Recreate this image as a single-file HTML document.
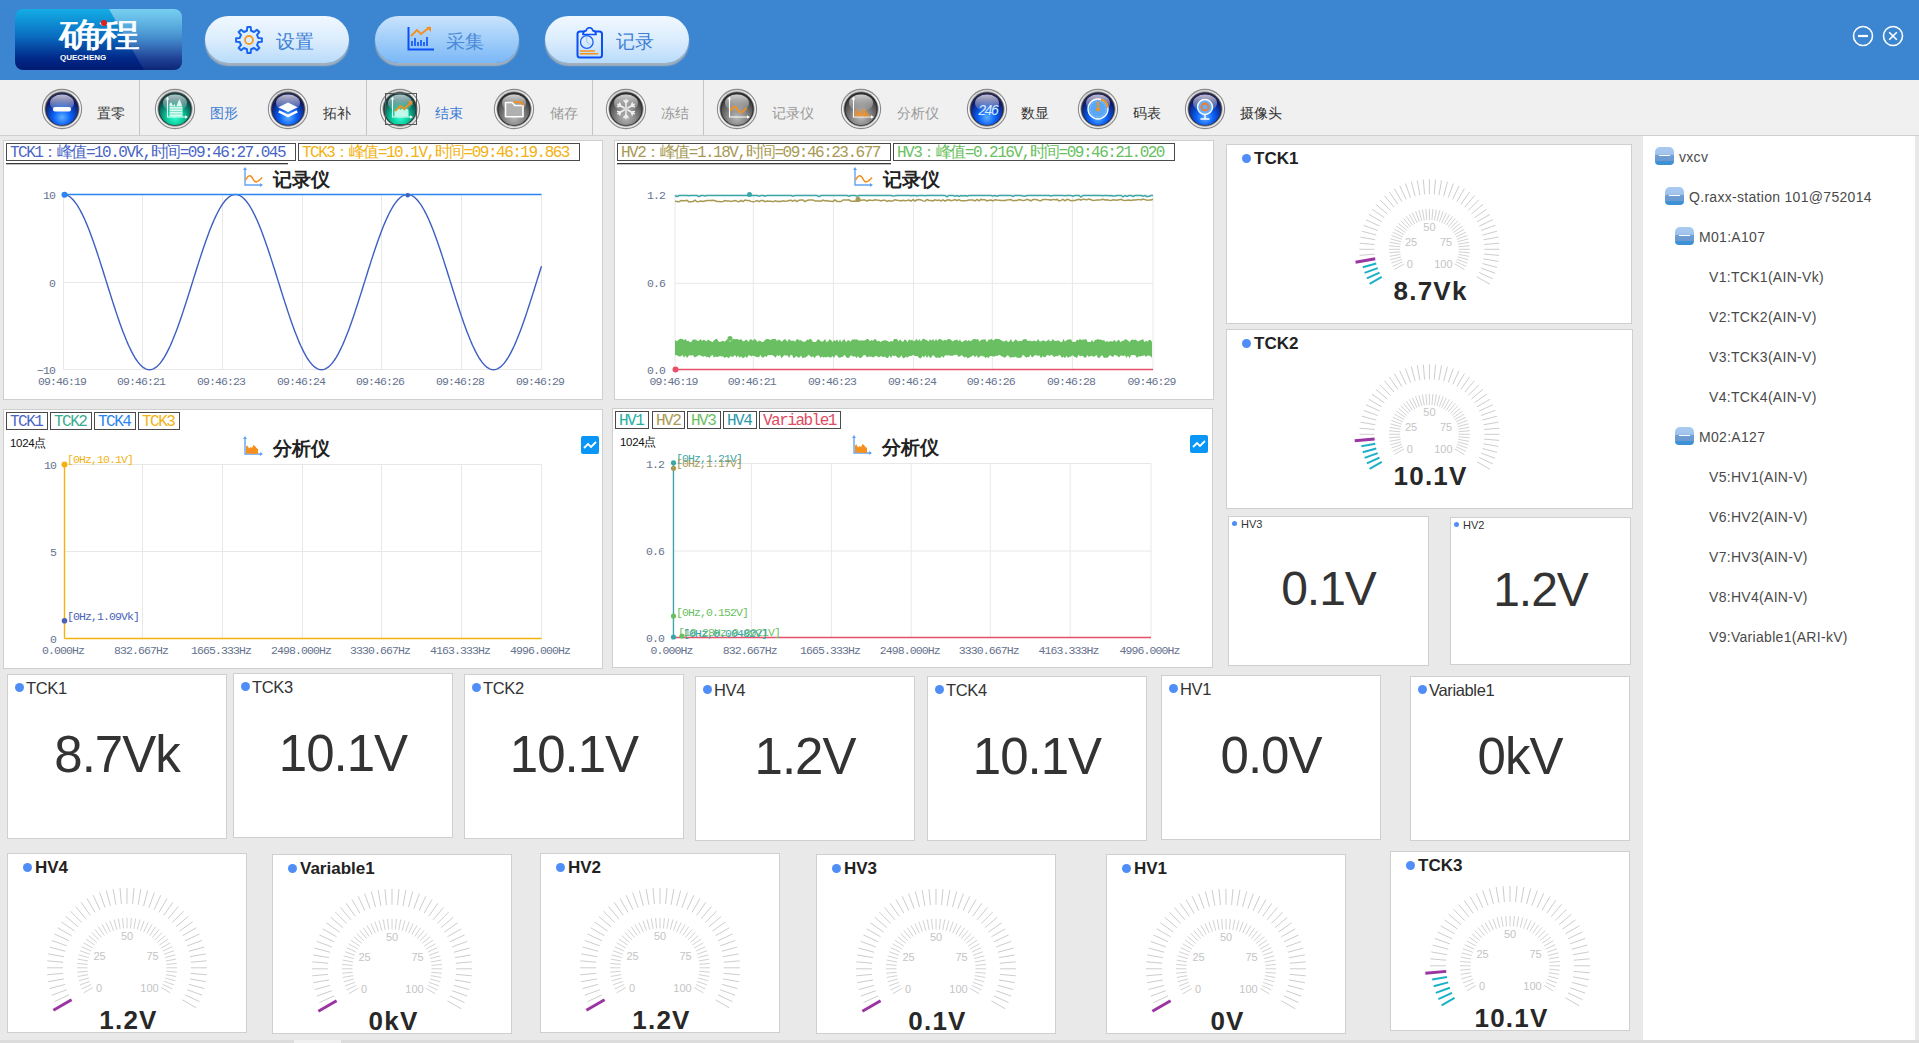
<!DOCTYPE html><html><head><meta charset="utf-8"><style>
*{box-sizing:border-box;margin:0;padding:0}
html,body{width:1919px;height:1043px;overflow:hidden;background:#e9e9e9;font-family:"Liberation Sans",sans-serif;position:relative}
.a{position:absolute}
.panel{position:absolute;background:#fff;border:1px solid #cfcfcf}
.lg{position:absolute;border:1px solid #4a4a4a;font-family:"Liberation Mono",monospace;font-size:16px;letter-spacing:-1.5px;line-height:18px;white-space:nowrap;padding-left:3px}
.ttl{position:absolute;font-size:19px;font-weight:bold;color:#222;line-height:20px;white-space:nowrap}
.dot{position:absolute;width:9px;height:9px;border-radius:50%;background:#4f8ef7}
.nc .lab{position:absolute;font-size:16px;color:#333;line-height:16px;white-space:nowrap}
.val{position:absolute;left:0;right:0;text-align:center;color:#333;white-space:nowrap}
.tb{position:absolute;font-size:14px;line-height:14px;white-space:nowrap}
.tree{position:absolute;font-size:14px;color:#4a4a4a;line-height:16px;white-space:nowrap;letter-spacing:0.3px}
</style></head><body>
<div class="a" style="left:0;top:0;width:1919px;height:80px;background:#3c85d0"></div>
<div class="a" style="left:15px;top:9px;width:167px;height:61px;border-radius:8px;overflow:hidden;background:linear-gradient(180deg,#14aee6 0%,#0a6cc0 45%,#022a8a 80%,#001a70 100%)">
<div class="a" style="left:0;top:0;width:300px;height:100%;background:linear-gradient(180deg,rgba(255,255,255,0.42),rgba(255,255,255,0.05));clip-path:polygon(94px 0,167px 0,167px 61px,129px 61px)"></div>
<div class="a" style="left:44px;top:9px;font-size:33px;line-height:34px;font-weight:normal;color:#fff;letter-spacing:-2px;transform:scaleX(1.27);transform-origin:0 0;-webkit-text-stroke:0.6px #fff">确程</div>
<div class="a" style="left:45px;top:44px;font-size:8px;line-height:9px;font-weight:bold;color:#fff">QUECHENG</div>
<div class="a" style="left:86px;top:11px;width:6px;height:6px;border-radius:50%;background:#e02020"></div>
</div>
<div class="a" style="left:205px;top:16px;width:144px;height:47px;border-radius:24px;background:linear-gradient(180deg,#f0f8ff 0%,#dcedfd 50%,#b8dbfa 100%);box-shadow:0 3px 1.5px rgba(170,178,186,0.95)">
<div class="a" style="left:29px;top:9px;width:30px;height:30px"><svg width="30" height="30" viewBox="0 0 30 30"><polygon points="24.27,12.93 27.89,13.31 27.89,16.69 24.27,17.07 23.02,20.09 25.31,22.92 22.92,25.31 20.09,23.02 17.07,24.27 16.69,27.89 13.31,27.89 12.93,24.27 9.91,23.02 7.08,25.31 4.69,22.92 6.98,20.09 5.73,17.07 2.11,16.69 2.11,13.31 5.73,12.93 6.98,9.91 4.69,7.08 7.08,4.69 9.91,6.98 12.93,5.73 13.31,2.11 16.69,2.11 17.07,5.73 20.09,6.98 22.92,4.69 25.31,7.08 23.02,9.91" fill="none" stroke="#1a66f0" stroke-width="2" stroke-linejoin="round"/><circle cx="15" cy="15" r="4" fill="none" stroke="#f59a23" stroke-width="1.8"/></svg></div>
<div class="a" style="left:71px;top:16px;font-size:19px;line-height:20px;color:#3c7fd4;letter-spacing:0px">设置</div>
</div>
<div class="a" style="left:375px;top:16px;width:144px;height:47px;border-radius:24px;background:linear-gradient(180deg,#c9e3fd 0%,#a5d0fa 45%,#7ab8f6 100%);box-shadow:0 3px 1.5px rgba(170,178,186,0.95)">
<div class="a" style="left:29px;top:9px;width:30px;height:30px"><svg width="30" height="30" viewBox="0 0 30 30"><path d="M4.5 2v22.5h27" fill="none" stroke="#0a50f5" stroke-width="2"/><path d="M8 21v-5M11 21v-8M14 21v-4M17 21v-6M20 21v-4M23 21v-9" stroke="#0a50f5" stroke-width="1.6"/><path d="M7 11l6-6 4 4 9-7" fill="none" stroke="#f5901e" stroke-width="1.8"/><path d="M22 2h5v5z" fill="#f5901e"/></svg></div>
<div class="a" style="left:71px;top:16px;font-size:19px;line-height:20px;color:#4a8ad8;letter-spacing:0px">采集</div>
</div>
<div class="a" style="left:545px;top:16px;width:144px;height:47px;border-radius:24px;background:linear-gradient(180deg,#f0f8ff 0%,#dcedfd 50%,#b8dbfa 100%);box-shadow:0 3px 1.5px rgba(170,178,186,0.95)">
<div class="a" style="left:29px;top:9px;width:30px;height:30px"><svg width="30" height="34" viewBox="0 0 30 34" style="position:absolute;left:2px;top:2px"><rect x="1.5" y="4.5" width="24.5" height="26" rx="2.5" fill="none" stroke="#0a50f5" stroke-width="2"/><path d="M7 7.5c0-2 1-3.5 3-3.8 0.6-2 2-3 3.5-3s2.9 1 3.5 3c2 0.3 3 1.8 3 3.8z" fill="#e6f3ff" stroke="#0a50f5" stroke-width="1.7"/><circle cx="10.8" cy="15" r="6.3" fill="none" stroke="#1a5ef5" stroke-width="1.3"/><path d="M10.8 9v6l4 3" fill="none" stroke="#8ab8f8" stroke-width="0.8"/><path d="M3.8 24h15.2M3.8 26.8h18.4" stroke="#f5901e" stroke-width="1.5"/></svg></div>
<div class="a" style="left:71px;top:16px;font-size:19px;line-height:20px;color:#3c7fd4;letter-spacing:0px">记录</div>
</div>
<svg class="a" style="left:1850px;top:23px" width="58" height="26" viewBox="0 0 58 26">
<circle cx="13" cy="13" r="9.5" fill="none" stroke="#fff" stroke-width="1.6"/><path d="M8 13h10" stroke="#fff" stroke-width="2.2"/>
<circle cx="43" cy="13" r="9.5" fill="none" stroke="#fff" stroke-width="1.6"/><path d="M39.2 9.2l7.6 7.6M46.8 9.2l-7.6 7.6" stroke="#fff" stroke-width="1.6"/>
</svg>
<div class="a" style="left:0;top:80px;width:1919px;height:56px;background:#f0f0f0;border-bottom:1px solid #cfcfcf"></div>
<div class="a" style="left:139px;top:80px;width:1px;height:55px;background:#c4c4c4"></div>
<div class="a" style="left:366px;top:80px;width:1px;height:55px;background:#c4c4c4"></div>
<div class="a" style="left:592px;top:80px;width:1px;height:55px;background:#c4c4c4"></div>
<div class="a" style="left:703px;top:80px;width:1px;height:55px;background:#c4c4c4"></div>
<svg class="a" style="left:40px;top:86.7px" width="44" height="44" viewBox="0 0 44 44"><defs><radialGradient id="d62" cx="50%" cy="75%" r="62%"><stop offset="0" stop-color="#5fb0ff"/><stop offset="0.45" stop-color="#0a60f6"/><stop offset="1" stop-color="#0a1a70"/></radialGradient><linearGradient id="h62" x1="0" y1="0" x2="0" y2="1"><stop offset="0" stop-color="#c9c6d6" stop-opacity="0.95"/><stop offset="1" stop-color="#c9c6d6" stop-opacity="0.1"/></linearGradient></defs><linearGradient id="s62" x1="0" y1="0" x2="0.3" y2="1"><stop offset="0" stop-color="#c8c8c8"/><stop offset="0.5" stop-color="#ffffff"/><stop offset="1" stop-color="#e6e6e6"/></linearGradient><circle cx="22" cy="22" r="19.6" fill="url(#s62)" stroke="#8a8a8a" stroke-width="1.1"/><circle cx="22" cy="22" r="17.2" fill="#2a2a44" stroke="#a0a0a0" stroke-width="0.8"/><circle cx="22" cy="22.5" r="15.6" fill="url(#d62)"/><ellipse cx="22" cy="16" rx="12" ry="8.5" fill="url(#h62)"/><g transform="translate(2,2)"><rect x="11" y="18" width="18" height="4.5" rx="2" fill="#fff"/></g></svg>
<div class="tb" style="left:97px;top:106px;color:#333">置零</div>
<svg class="a" style="left:153px;top:86.7px" width="44" height="44" viewBox="0 0 44 44"><defs><radialGradient id="d175" cx="50%" cy="75%" r="62%"><stop offset="0" stop-color="#30ffd0"/><stop offset="0.45" stop-color="#08c89a"/><stop offset="1" stop-color="#0a4a48"/></radialGradient><linearGradient id="h175" x1="0" y1="0" x2="0" y2="1"><stop offset="0" stop-color="#b8ccd0" stop-opacity="0.95"/><stop offset="1" stop-color="#b8ccd0" stop-opacity="0.1"/></linearGradient></defs><linearGradient id="s175" x1="0" y1="0" x2="0.3" y2="1"><stop offset="0" stop-color="#c8c8c8"/><stop offset="0.5" stop-color="#ffffff"/><stop offset="1" stop-color="#e6e6e6"/></linearGradient><circle cx="22" cy="22" r="19.6" fill="url(#s175)" stroke="#8a8a8a" stroke-width="1.1"/><circle cx="22" cy="22" r="17.2" fill="#243c3a" stroke="#a0a0a0" stroke-width="0.8"/><circle cx="22" cy="22.5" r="15.6" fill="url(#d175)"/><ellipse cx="22" cy="16" rx="12" ry="8.5" fill="url(#h175)"/><g transform="translate(2,2)"><path d="M12.5 9.5v18.5h18" fill="none" stroke="#e8fff8" stroke-width="1.1"/><path d="M10.8 10.5l1.7-3 1.7 3z M30 26.3l3 1.7-3 1.7z" fill="#e8fff8"/><path d="M14.5 27.5V15l1.5-2 2 4 1.5-2 1.5 3 2-5 1.5-3 2 5 1 4v8.5z" fill="#e6fff6" opacity="0.92"/><g stroke="#3ac8a8" stroke-width="0.7" opacity="0.8"><path d="M14 17.5h13M14 20h13M14 22.5h13M14 25h13"/></g></g></svg>
<div class="tb" style="left:210px;top:106px;color:#3a7bd5">图形</div>
<svg class="a" style="left:266px;top:86.7px" width="44" height="44" viewBox="0 0 44 44"><defs><radialGradient id="d288" cx="50%" cy="75%" r="62%"><stop offset="0" stop-color="#5fb0ff"/><stop offset="0.45" stop-color="#0a60f6"/><stop offset="1" stop-color="#0a1a70"/></radialGradient><linearGradient id="h288" x1="0" y1="0" x2="0" y2="1"><stop offset="0" stop-color="#c9c6d6" stop-opacity="0.95"/><stop offset="1" stop-color="#c9c6d6" stop-opacity="0.1"/></linearGradient></defs><linearGradient id="s288" x1="0" y1="0" x2="0.3" y2="1"><stop offset="0" stop-color="#c8c8c8"/><stop offset="0.5" stop-color="#ffffff"/><stop offset="1" stop-color="#e6e6e6"/></linearGradient><circle cx="22" cy="22" r="19.6" fill="url(#s288)" stroke="#8a8a8a" stroke-width="1.1"/><circle cx="22" cy="22" r="17.2" fill="#2a2a44" stroke="#a0a0a0" stroke-width="0.8"/><circle cx="22" cy="22.5" r="15.6" fill="url(#d288)"/><ellipse cx="22" cy="16" rx="12" ry="8.5" fill="url(#h288)"/><g transform="translate(2,2)"><path d="M20 13.5l9.5 4.8-9.5 4.8-9.5-4.8z" fill="#fff"/><path d="M10.8 22.3l9.2 4.6 9.2-4.6" fill="none" stroke="#fff" stroke-width="2.6"/></g></svg>
<div class="tb" style="left:323px;top:106px;color:#333">拓补</div>
<svg class="a" style="left:378px;top:86.7px" width="44" height="44" viewBox="0 0 44 44"><defs><radialGradient id="d400" cx="50%" cy="75%" r="62%"><stop offset="0" stop-color="#30ffd0"/><stop offset="0.45" stop-color="#08c89a"/><stop offset="1" stop-color="#0a4a48"/></radialGradient><linearGradient id="h400" x1="0" y1="0" x2="0" y2="1"><stop offset="0" stop-color="#b8ccd0" stop-opacity="0.95"/><stop offset="1" stop-color="#b8ccd0" stop-opacity="0.1"/></linearGradient></defs><linearGradient id="s400" x1="0" y1="0" x2="0.3" y2="1"><stop offset="0" stop-color="#c8c8c8"/><stop offset="0.5" stop-color="#ffffff"/><stop offset="1" stop-color="#e6e6e6"/></linearGradient><circle cx="22" cy="22" r="19.6" fill="url(#s400)" stroke="#8a8a8a" stroke-width="1.1"/><circle cx="22" cy="22" r="17.2" fill="#243c3a" stroke="#a0a0a0" stroke-width="0.8"/><circle cx="22" cy="22.5" r="15.6" fill="url(#d400)"/><ellipse cx="22" cy="16" rx="12" ry="8.5" fill="url(#h400)"/><g transform="translate(2,2)"><path d="M12.5 9.5v18.5h18" fill="none" stroke="#e8fff8" stroke-width="1.1"/><path d="M10.8 10.5l1.7-3 1.7 3z M30 26.3l3 1.7-3 1.7z" fill="#e8fff8"/><path d="M14.5 27.5V21l2 1 2-3 2 2 2-1.5 2 2 2-2 2 1.5v6.5z" fill="#dffff4" opacity="0.85"/><path d="M15 22l5.5-5 3.5 3 6-5.5" fill="none" stroke="#f5901e" stroke-width="1.8"/><path d="M28 12h4.5v4.5z" fill="#f5901e"/></g></svg>
<div class="tb" style="left:435px;top:106px;color:#3a7bd5">结束</div>
<svg class="a" style="left:492px;top:86.7px" width="44" height="44" viewBox="0 0 44 44"><defs><radialGradient id="d514" cx="50%" cy="75%" r="62%"><stop offset="0" stop-color="#b8b8b8"/><stop offset="0.45" stop-color="#8c8c8c"/><stop offset="1" stop-color="#454545"/></radialGradient><linearGradient id="h514" x1="0" y1="0" x2="0" y2="1"><stop offset="0" stop-color="#d8d8d8" stop-opacity="0.95"/><stop offset="1" stop-color="#d8d8d8" stop-opacity="0.1"/></linearGradient></defs><linearGradient id="s514" x1="0" y1="0" x2="0.3" y2="1"><stop offset="0" stop-color="#c8c8c8"/><stop offset="0.5" stop-color="#ffffff"/><stop offset="1" stop-color="#e6e6e6"/></linearGradient><circle cx="22" cy="22" r="19.6" fill="url(#s514)" stroke="#8a8a8a" stroke-width="1.1"/><circle cx="22" cy="22" r="17.2" fill="#2c2c2c" stroke="#a0a0a0" stroke-width="0.8"/><circle cx="22" cy="22.5" r="15.6" fill="url(#d514)"/><ellipse cx="22" cy="16" rx="12" ry="8.5" fill="url(#h514)"/><g transform="translate(2,2)"><path d="M11.5 13.5h6.8l2.4 3h8.3v11.2h-17.5z" fill="#b0b0b0" stroke="#fff" stroke-width="1.6" stroke-linejoin="round"/><path d="M19.5 13.2h7.8l1.8 3" fill="none" stroke="#f5901e" stroke-width="1.8"/></g></svg>
<div class="tb" style="left:550px;top:106px;color:#999">储存</div>
<svg class="a" style="left:604px;top:86.7px" width="44" height="44" viewBox="0 0 44 44"><defs><radialGradient id="d626" cx="50%" cy="75%" r="62%"><stop offset="0" stop-color="#b8b8b8"/><stop offset="0.45" stop-color="#8c8c8c"/><stop offset="1" stop-color="#454545"/></radialGradient><linearGradient id="h626" x1="0" y1="0" x2="0" y2="1"><stop offset="0" stop-color="#d8d8d8" stop-opacity="0.95"/><stop offset="1" stop-color="#d8d8d8" stop-opacity="0.1"/></linearGradient></defs><linearGradient id="s626" x1="0" y1="0" x2="0.3" y2="1"><stop offset="0" stop-color="#c8c8c8"/><stop offset="0.5" stop-color="#ffffff"/><stop offset="1" stop-color="#e6e6e6"/></linearGradient><circle cx="22" cy="22" r="19.6" fill="url(#s626)" stroke="#8a8a8a" stroke-width="1.1"/><circle cx="22" cy="22" r="17.2" fill="#2c2c2c" stroke="#a0a0a0" stroke-width="0.8"/><circle cx="22" cy="22.5" r="15.6" fill="url(#d626)"/><ellipse cx="22" cy="16" rx="12" ry="8.5" fill="url(#h626)"/><g transform="translate(2,2)"><path d="M20 20L20.00 10.50 M20.00 14.00L17.94 11.55 M20.00 14.00L22.06 11.55 M20 20L11.77 15.25 M14.80 17.00L11.65 17.56 M14.80 17.00L13.71 13.99 M20 20L11.77 24.75 M14.80 23.00L13.71 26.01 M14.80 23.00L11.65 22.44 M20 20L20.00 29.50 M20.00 26.00L22.06 28.45 M20.00 26.00L17.94 28.45 M20 20L28.23 24.75 M25.20 23.00L28.35 22.44 M25.20 23.00L26.29 26.01 M20 20L28.23 15.25 M25.20 17.00L26.29 13.99 M25.20 17.00L28.35 17.56" stroke="#f0f0f0" stroke-width="1.5" fill="none" stroke-linecap="round"/><circle cx="20" cy="20" r="2.2" fill="#d8d8d8"/></g></svg>
<div class="tb" style="left:661px;top:106px;color:#999">冻结</div>
<svg class="a" style="left:715px;top:86.7px" width="44" height="44" viewBox="0 0 44 44"><defs><radialGradient id="d737" cx="50%" cy="75%" r="62%"><stop offset="0" stop-color="#b8b8b8"/><stop offset="0.45" stop-color="#8c8c8c"/><stop offset="1" stop-color="#454545"/></radialGradient><linearGradient id="h737" x1="0" y1="0" x2="0" y2="1"><stop offset="0" stop-color="#d8d8d8" stop-opacity="0.95"/><stop offset="1" stop-color="#d8d8d8" stop-opacity="0.1"/></linearGradient></defs><linearGradient id="s737" x1="0" y1="0" x2="0.3" y2="1"><stop offset="0" stop-color="#c8c8c8"/><stop offset="0.5" stop-color="#ffffff"/><stop offset="1" stop-color="#e6e6e6"/></linearGradient><circle cx="22" cy="22" r="19.6" fill="url(#s737)" stroke="#8a8a8a" stroke-width="1.1"/><circle cx="22" cy="22" r="17.2" fill="#2c2c2c" stroke="#a0a0a0" stroke-width="0.8"/><circle cx="22" cy="22.5" r="15.6" fill="url(#d737)"/><ellipse cx="22" cy="16" rx="12" ry="8.5" fill="url(#h737)"/><g transform="translate(2,2)"><path d="M12.5 9.5v18.5h18" fill="none" stroke="#fff" stroke-width="1.1"/><path d="M10.8 10.5l1.7-3 1.7 3z M30 26.3l3 1.7-3 1.7z" fill="#fff"/><path d="M13.5 22c2.5-5 5-5.5 7-1.5s4.5 4 9-1.5" fill="none" stroke="#f5901e" stroke-width="1.8"/></g></svg>
<div class="tb" style="left:772px;top:106px;color:#999">记录仪</div>
<svg class="a" style="left:839px;top:86.7px" width="44" height="44" viewBox="0 0 44 44"><defs><radialGradient id="d861" cx="50%" cy="75%" r="62%"><stop offset="0" stop-color="#b8b8b8"/><stop offset="0.45" stop-color="#8c8c8c"/><stop offset="1" stop-color="#454545"/></radialGradient><linearGradient id="h861" x1="0" y1="0" x2="0" y2="1"><stop offset="0" stop-color="#d8d8d8" stop-opacity="0.95"/><stop offset="1" stop-color="#d8d8d8" stop-opacity="0.1"/></linearGradient></defs><linearGradient id="s861" x1="0" y1="0" x2="0.3" y2="1"><stop offset="0" stop-color="#c8c8c8"/><stop offset="0.5" stop-color="#ffffff"/><stop offset="1" stop-color="#e6e6e6"/></linearGradient><circle cx="22" cy="22" r="19.6" fill="url(#s861)" stroke="#8a8a8a" stroke-width="1.1"/><circle cx="22" cy="22" r="17.2" fill="#2c2c2c" stroke="#a0a0a0" stroke-width="0.8"/><circle cx="22" cy="22.5" r="15.6" fill="url(#d861)"/><ellipse cx="22" cy="16" rx="12" ry="8.5" fill="url(#h861)"/><g transform="translate(2,2)"><path d="M12.5 9.5v18.5h18" fill="none" stroke="#fff" stroke-width="1.1"/><path d="M10.8 10.5l1.7-3 1.7 3z M30 26.3l3 1.7-3 1.7z" fill="#fff"/><g stroke="#f5901e" stroke-width="1.1"><path d="M14.5 27.5v-6M16 27.5v-7.5M17.5 27.5v-5M19 27.5v-4M20.5 27.5v-6M22 27.5v-8M23.5 27.5v-7M25 27.5v-5M26.5 27.5v-3.5M28 27.5v-2"/></g></g></svg>
<div class="tb" style="left:897px;top:106px;color:#999">分析仪</div>
<svg class="a" style="left:965px;top:86.7px" width="44" height="44" viewBox="0 0 44 44"><defs><radialGradient id="d987" cx="50%" cy="75%" r="62%"><stop offset="0" stop-color="#5fb0ff"/><stop offset="0.45" stop-color="#0a60f6"/><stop offset="1" stop-color="#0a1a70"/></radialGradient><linearGradient id="h987" x1="0" y1="0" x2="0" y2="1"><stop offset="0" stop-color="#c9c6d6" stop-opacity="0.95"/><stop offset="1" stop-color="#c9c6d6" stop-opacity="0.1"/></linearGradient></defs><linearGradient id="s987" x1="0" y1="0" x2="0.3" y2="1"><stop offset="0" stop-color="#c8c8c8"/><stop offset="0.5" stop-color="#ffffff"/><stop offset="1" stop-color="#e6e6e6"/></linearGradient><circle cx="22" cy="22" r="19.6" fill="url(#s987)" stroke="#8a8a8a" stroke-width="1.1"/><circle cx="22" cy="22" r="17.2" fill="#2a2a44" stroke="#a0a0a0" stroke-width="0.8"/><circle cx="22" cy="22.5" r="15.6" fill="url(#d987)"/><ellipse cx="22" cy="16" rx="12" ry="8.5" fill="url(#h987)"/><g transform="translate(2,2)"><text x="20.5" y="25.5" text-anchor="middle" font-family="Liberation Mono" font-size="14" fill="#d8ecff" letter-spacing="-2" font-style="italic">246</text></g></svg>
<div class="tb" style="left:1021px;top:106px;color:#333">数显</div>
<svg class="a" style="left:1076px;top:86.7px" width="44" height="44" viewBox="0 0 44 44"><defs><radialGradient id="d1098" cx="50%" cy="75%" r="62%"><stop offset="0" stop-color="#5fb0ff"/><stop offset="0.45" stop-color="#0a60f6"/><stop offset="1" stop-color="#0a1a70"/></radialGradient><linearGradient id="h1098" x1="0" y1="0" x2="0" y2="1"><stop offset="0" stop-color="#c9c6d6" stop-opacity="0.95"/><stop offset="1" stop-color="#c9c6d6" stop-opacity="0.1"/></linearGradient></defs><linearGradient id="s1098" x1="0" y1="0" x2="0.3" y2="1"><stop offset="0" stop-color="#c8c8c8"/><stop offset="0.5" stop-color="#ffffff"/><stop offset="1" stop-color="#e6e6e6"/></linearGradient><circle cx="22" cy="22" r="19.6" fill="url(#s1098)" stroke="#8a8a8a" stroke-width="1.1"/><circle cx="22" cy="22" r="17.2" fill="#2a2a44" stroke="#a0a0a0" stroke-width="0.8"/><circle cx="22" cy="22.5" r="15.6" fill="url(#d1098)"/><ellipse cx="22" cy="16" rx="12" ry="8.5" fill="url(#h1098)"/><g transform="translate(2,2)"><circle cx="20" cy="20" r="10" fill="#5aa8f5" stroke="#fff" stroke-width="1.3"/><circle cx="20" cy="20" r="8" fill="none" stroke="#bcdcff" stroke-width="0.6" stroke-dasharray="1 1.2"/><path d="M22.9 10.4A10 10 0 0 1 29.9 18.6" fill="none" stroke="#f5901e" stroke-width="2"/><path d="M20 12.5v7" stroke="#f5901e" stroke-width="2"/><circle cx="20" cy="20.5" r="2" fill="#f5901e"/></g></svg>
<div class="tb" style="left:1133px;top:106px;color:#333">码表</div>
<svg class="a" style="left:1183px;top:86.7px" width="44" height="44" viewBox="0 0 44 44"><defs><radialGradient id="d1205" cx="50%" cy="75%" r="62%"><stop offset="0" stop-color="#5fb0ff"/><stop offset="0.45" stop-color="#0a60f6"/><stop offset="1" stop-color="#0a1a70"/></radialGradient><linearGradient id="h1205" x1="0" y1="0" x2="0" y2="1"><stop offset="0" stop-color="#c9c6d6" stop-opacity="0.95"/><stop offset="1" stop-color="#c9c6d6" stop-opacity="0.1"/></linearGradient></defs><linearGradient id="s1205" x1="0" y1="0" x2="0.3" y2="1"><stop offset="0" stop-color="#c8c8c8"/><stop offset="0.5" stop-color="#ffffff"/><stop offset="1" stop-color="#e6e6e6"/></linearGradient><circle cx="22" cy="22" r="19.6" fill="url(#s1205)" stroke="#8a8a8a" stroke-width="1.1"/><circle cx="22" cy="22" r="17.2" fill="#2a2a44" stroke="#a0a0a0" stroke-width="0.8"/><circle cx="22" cy="22.5" r="15.6" fill="url(#d1205)"/><ellipse cx="22" cy="16" rx="12" ry="8.5" fill="url(#h1205)"/><g transform="translate(2,2)"><circle cx="20" cy="18" r="7.5" fill="#6ab0f8" stroke="#fff" stroke-width="1.4"/><circle cx="20" cy="18" r="3.5" fill="none" stroke="#f57a20" stroke-width="1.8"/><path d="M20 25.5v4M15.5 30h9" stroke="#fff" stroke-width="1.5"/></g></svg>
<div class="tb" style="left:1240px;top:106px;color:#333">摄像头</div>
<div class="a" style="left:385px;top:93px;width:32px;height:32px;border:1px solid #555"></div>
<div class="panel" style="left:3px;top:140px;width:600px;height:260px"></div>
<div class="panel" style="left:614px;top:140px;width:600px;height:260px"></div>
<div class="panel" style="left:3px;top:409px;width:600px;height:260px"></div>
<div class="panel" style="left:612px;top:408px;width:601px;height:260px"></div>
<div class="a" style="left:1643px;top:136px;width:272px;height:904px;background:#fff"></div>
<div class="panel" style="left:1226px;top:144px;width:406px;height:180px"></div>
<div class="panel" style="left:1226px;top:329px;width:407px;height:180px"></div>
<div class="panel" style="left:1228px;top:516px;width:201px;height:150px"></div>
<div class="panel" style="left:1450px;top:517px;width:181px;height:148px"></div>
<div class="panel" style="left:7px;top:674px;width:220px;height:165px"></div>
<div class="panel" style="left:233px;top:673px;width:220px;height:165px"></div>
<div class="panel" style="left:464px;top:674px;width:220px;height:165px"></div>
<div class="panel" style="left:695px;top:676px;width:220px;height:165px"></div>
<div class="panel" style="left:927px;top:676px;width:220px;height:165px"></div>
<div class="panel" style="left:1161px;top:675px;width:220px;height:165px"></div>
<div class="panel" style="left:1410px;top:676px;width:220px;height:165px"></div>
<div class="panel" style="left:7px;top:853px;width:240px;height:180px"></div>
<div class="panel" style="left:272px;top:854px;width:240px;height:180px"></div>
<div class="panel" style="left:540px;top:853px;width:240px;height:180px"></div>
<div class="panel" style="left:816px;top:854px;width:240px;height:180px"></div>
<div class="panel" style="left:1106px;top:854px;width:240px;height:180px"></div>
<div class="panel" style="left:1390px;top:851px;width:240px;height:180px"></div>
<div class="a" style="left:0;top:1040px;width:1919px;height:3px;background:#dcdcdc"></div>
<div class="a" style="left:294px;top:1040px;width:47px;height:3px;background:#f0f0f0"></div>
<svg class="a" style="left:0;top:0" width="1919" height="1043" viewBox="0 0 1919 1043"><line x1="63.5" y1="194.5" x2="63.5" y2="369.5" stroke="#e8e8e8" stroke-width="1"/><line x1="142.5" y1="194.5" x2="142.5" y2="369.5" stroke="#e8e8e8" stroke-width="1"/><line x1="222.5" y1="194.5" x2="222.5" y2="369.5" stroke="#e8e8e8" stroke-width="1"/><line x1="302.5" y1="194.5" x2="302.5" y2="369.5" stroke="#e8e8e8" stroke-width="1"/><line x1="381.5" y1="194.5" x2="381.5" y2="369.5" stroke="#e8e8e8" stroke-width="1"/><line x1="461.5" y1="194.5" x2="461.5" y2="369.5" stroke="#e8e8e8" stroke-width="1"/><line x1="541.5" y1="194.5" x2="541.5" y2="369.5" stroke="#e8e8e8" stroke-width="1"/><line x1="63.5" y1="194.5" x2="541.5" y2="194.5" stroke="#e8e8e8" stroke-width="1"/><line x1="63.5" y1="282.5" x2="541.5" y2="282.5" stroke="#e8e8e8" stroke-width="1"/><line x1="63.5" y1="369.5" x2="541.5" y2="369.5" stroke="#e8e8e8" stroke-width="1"/><text x="55.0" y="198.5" text-anchor="end" font-family="Liberation Mono" font-size="11.5" fill="#66728e" letter-spacing="-0.9">10</text><text x="55.0" y="286.5" text-anchor="end" font-family="Liberation Mono" font-size="11.5" fill="#66728e" letter-spacing="-0.9">0</text><text x="55.0" y="373.5" text-anchor="end" font-family="Liberation Mono" font-size="11.5" fill="#66728e" letter-spacing="-0.9">−10</text><text x="62.0" y="385.0" text-anchor="middle" font-family="Liberation Mono" font-size="11.5" fill="#66728e" letter-spacing="-0.9">09:46:19</text><text x="141.0" y="385.0" text-anchor="middle" font-family="Liberation Mono" font-size="11.5" fill="#66728e" letter-spacing="-0.9">09:46:21</text><text x="221.0" y="385.0" text-anchor="middle" font-family="Liberation Mono" font-size="11.5" fill="#66728e" letter-spacing="-0.9">09:46:23</text><text x="301.0" y="385.0" text-anchor="middle" font-family="Liberation Mono" font-size="11.5" fill="#66728e" letter-spacing="-0.9">09:46:24</text><text x="380.0" y="385.0" text-anchor="middle" font-family="Liberation Mono" font-size="11.5" fill="#66728e" letter-spacing="-0.9">09:46:26</text><text x="460.0" y="385.0" text-anchor="middle" font-family="Liberation Mono" font-size="11.5" fill="#66728e" letter-spacing="-0.9">09:46:28</text><text x="540.0" y="385.0" text-anchor="middle" font-family="Liberation Mono" font-size="11.5" fill="#66728e" letter-spacing="-0.9">09:46:29</text><polyline points="63.5,194.5 64.5,194.6 65.5,194.7 66.5,195.0 67.5,195.4 68.5,196.0 69.5,196.6 70.5,197.3 71.5,198.2 72.5,199.2 73.5,200.3 74.5,201.5 75.5,202.8 76.5,204.2 77.5,205.7 78.5,207.3 79.5,209.0 80.5,210.9 81.5,212.8 82.5,214.8 83.5,216.9 84.5,219.0 85.5,221.3 86.5,223.6 87.5,226.1 88.5,228.6 89.5,231.1 90.5,233.8 91.5,236.5 92.5,239.2 93.5,242.0 94.5,244.9 95.5,247.8 96.5,250.8 97.5,253.8 98.5,256.9 99.5,259.9 100.5,263.1 101.5,266.2 102.5,269.3 103.5,272.5 104.5,275.7 105.5,278.9 106.5,282.1 107.5,285.3 108.5,288.5 109.5,291.7 110.5,294.9 111.5,298.0 112.5,301.1 113.5,304.3 114.5,307.3 115.5,310.4 116.5,313.4 117.5,316.4 118.5,319.3 119.5,322.2 120.5,325.0 121.5,327.7 122.5,330.4 123.5,333.1 124.5,335.6 125.5,338.1 126.5,340.6 127.5,342.9 128.5,345.2 129.5,347.3 130.5,349.4 131.5,351.4 132.5,353.3 133.5,355.2 134.5,356.9 135.5,358.5 136.5,360.0 137.5,361.4 138.5,362.7 139.5,363.9 140.5,365.0 141.5,366.0 142.5,366.9 143.5,367.6 144.5,368.2 145.5,368.8 146.5,369.2 147.5,369.5 148.5,369.6 149.5,369.7 150.5,369.6 151.5,369.5 152.5,369.2 153.5,368.8 154.5,368.2 155.5,367.6 156.5,366.9 157.5,366.0 158.5,365.0 159.5,363.9 160.5,362.7 161.5,361.4 162.5,360.0 163.5,358.5 164.5,356.9 165.5,355.2 166.5,353.3 167.5,351.4 168.5,349.4 169.5,347.3 170.5,345.2 171.5,342.9 172.5,340.6 173.5,338.1 174.5,335.6 175.5,333.1 176.5,330.4 177.5,327.7 178.5,325.0 179.5,322.2 180.5,319.3 181.5,316.4 182.5,313.4 183.5,310.4 184.5,307.3 185.5,304.3 186.5,301.1 187.5,298.0 188.5,294.9 189.5,291.7 190.5,288.5 191.5,285.3 192.5,282.1 193.5,278.9 194.5,275.7 195.5,272.5 196.5,269.3 197.5,266.2 198.5,263.1 199.5,259.9 200.5,256.9 201.5,253.8 202.5,250.8 203.5,247.8 204.5,244.9 205.5,242.0 206.5,239.2 207.5,236.5 208.5,233.8 209.5,231.1 210.5,228.6 211.5,226.1 212.5,223.6 213.5,221.3 214.5,219.0 215.5,216.9 216.5,214.8 217.5,212.8 218.5,210.9 219.5,209.0 220.5,207.3 221.5,205.7 222.5,204.2 223.5,202.8 224.5,201.5 225.5,200.3 226.5,199.2 227.5,198.2 228.5,197.3 229.5,196.6 230.5,196.0 231.5,195.4 232.5,195.0 233.5,194.7 234.5,194.6 235.5,194.5 236.5,194.6 237.5,194.7 238.5,195.0 239.5,195.4 240.5,196.0 241.5,196.6 242.5,197.3 243.5,198.2 244.5,199.2 245.5,200.3 246.5,201.5 247.5,202.8 248.5,204.2 249.5,205.7 250.5,207.3 251.5,209.0 252.5,210.9 253.5,212.8 254.5,214.8 255.5,216.9 256.5,219.0 257.5,221.3 258.5,223.6 259.5,226.1 260.5,228.6 261.5,231.1 262.5,233.8 263.5,236.5 264.5,239.2 265.5,242.0 266.5,244.9 267.5,247.8 268.5,250.8 269.5,253.8 270.5,256.9 271.5,259.9 272.5,263.1 273.5,266.2 274.5,269.3 275.5,272.5 276.5,275.7 277.5,278.9 278.5,282.1 279.5,285.3 280.5,288.5 281.5,291.7 282.5,294.9 283.5,298.0 284.5,301.1 285.5,304.3 286.5,307.3 287.5,310.4 288.5,313.4 289.5,316.4 290.5,319.3 291.5,322.2 292.5,325.0 293.5,327.7 294.5,330.4 295.5,333.1 296.5,335.6 297.5,338.1 298.5,340.6 299.5,342.9 300.5,345.2 301.5,347.3 302.5,349.4 303.5,351.4 304.5,353.3 305.5,355.2 306.5,356.9 307.5,358.5 308.5,360.0 309.5,361.4 310.5,362.7 311.5,363.9 312.5,365.0 313.5,366.0 314.5,366.9 315.5,367.6 316.5,368.2 317.5,368.8 318.5,369.2 319.5,369.5 320.5,369.6 321.5,369.7 322.5,369.6 323.5,369.5 324.5,369.2 325.5,368.8 326.5,368.2 327.5,367.6 328.5,366.9 329.5,366.0 330.5,365.0 331.5,363.9 332.5,362.7 333.5,361.4 334.5,360.0 335.5,358.5 336.5,356.9 337.5,355.2 338.5,353.3 339.5,351.4 340.5,349.4 341.5,347.3 342.5,345.2 343.5,342.9 344.5,340.6 345.5,338.1 346.5,335.6 347.5,333.1 348.5,330.4 349.5,327.7 350.5,325.0 351.5,322.2 352.5,319.3 353.5,316.4 354.5,313.4 355.5,310.4 356.5,307.3 357.5,304.3 358.5,301.1 359.5,298.0 360.5,294.9 361.5,291.7 362.5,288.5 363.5,285.3 364.5,282.1 365.5,278.9 366.5,275.7 367.5,272.5 368.5,269.3 369.5,266.2 370.5,263.1 371.5,259.9 372.5,256.9 373.5,253.8 374.5,250.8 375.5,247.8 376.5,244.9 377.5,242.0 378.5,239.2 379.5,236.5 380.5,233.8 381.5,231.1 382.5,228.6 383.5,226.1 384.5,223.6 385.5,221.3 386.5,219.0 387.5,216.9 388.5,214.8 389.5,212.8 390.5,210.9 391.5,209.0 392.5,207.3 393.5,205.7 394.5,204.2 395.5,202.8 396.5,201.5 397.5,200.3 398.5,199.2 399.5,198.2 400.5,197.3 401.5,196.6 402.5,196.0 403.5,195.4 404.5,195.0 405.5,194.7 406.5,194.6 407.5,194.5 408.5,194.6 409.5,194.7 410.5,195.0 411.5,195.4 412.5,196.0 413.5,196.6 414.5,197.3 415.5,198.2 416.5,199.2 417.5,200.3 418.5,201.5 419.5,202.8 420.5,204.2 421.5,205.7 422.5,207.3 423.5,209.0 424.5,210.9 425.5,212.8 426.5,214.8 427.5,216.9 428.5,219.0 429.5,221.3 430.5,223.6 431.5,226.1 432.5,228.6 433.5,231.1 434.5,233.8 435.5,236.5 436.5,239.2 437.5,242.0 438.5,244.9 439.5,247.8 440.5,250.8 441.5,253.8 442.5,256.9 443.5,259.9 444.5,263.1 445.5,266.2 446.5,269.3 447.5,272.5 448.5,275.7 449.5,278.9 450.5,282.1 451.5,285.3 452.5,288.5 453.5,291.7 454.5,294.9 455.5,298.0 456.5,301.1 457.5,304.3 458.5,307.3 459.5,310.4 460.5,313.4 461.5,316.4 462.5,319.3 463.5,322.2 464.5,325.0 465.5,327.7 466.5,330.4 467.5,333.1 468.5,335.6 469.5,338.1 470.5,340.6 471.5,342.9 472.5,345.2 473.5,347.3 474.5,349.4 475.5,351.4 476.5,353.3 477.5,355.2 478.5,356.9 479.5,358.5 480.5,360.0 481.5,361.4 482.5,362.7 483.5,363.9 484.5,365.0 485.5,366.0 486.5,366.9 487.5,367.6 488.5,368.2 489.5,368.8 490.5,369.2 491.5,369.5 492.5,369.6 493.5,369.7 494.5,369.6 495.5,369.5 496.5,369.2 497.5,368.8 498.5,368.2 499.5,367.6 500.5,366.9 501.5,366.0 502.5,365.0 503.5,363.9 504.5,362.7 505.5,361.4 506.5,360.0 507.5,358.5 508.5,356.9 509.5,355.2 510.5,353.3 511.5,351.4 512.5,349.4 513.5,347.3 514.5,345.2 515.5,342.9 516.5,340.6 517.5,338.1 518.5,335.6 519.5,333.1 520.5,330.4 521.5,327.7 522.5,325.0 523.5,322.2 524.5,319.3 525.5,316.4 526.5,313.4 527.5,310.4 528.5,307.3 529.5,304.3 530.5,301.1 531.5,298.0 532.5,294.9 533.5,291.7 534.5,288.5 535.5,285.3 536.5,282.1 537.5,278.9 538.5,275.7 539.5,272.5 540.5,269.3 541.5,266.2" fill="none" stroke="#3d5fc2" stroke-width="1.4"/><line x1="63.5" y1="194.5" x2="541.5" y2="194.5" stroke="#2a84f2" stroke-width="1.5"/><circle cx="64.5" cy="194.8" r="3" fill="#2a84f2"/><circle cx="407.7" cy="195.2" r="2.2" fill="#3d5fc2"/><line x1="675.0" y1="195.0" x2="675.0" y2="369.6" stroke="#e8e8e8" stroke-width="1"/><line x1="753.3" y1="195.0" x2="753.3" y2="369.6" stroke="#e8e8e8" stroke-width="1"/><line x1="833.4" y1="195.0" x2="833.4" y2="369.6" stroke="#e8e8e8" stroke-width="1"/><line x1="913.5" y1="195.0" x2="913.5" y2="369.6" stroke="#e8e8e8" stroke-width="1"/><line x1="992.3" y1="195.0" x2="992.3" y2="369.6" stroke="#e8e8e8" stroke-width="1"/><line x1="1072.4" y1="195.0" x2="1072.4" y2="369.6" stroke="#e8e8e8" stroke-width="1"/><line x1="1153.0" y1="195.0" x2="1153.0" y2="369.6" stroke="#e8e8e8" stroke-width="1"/><line x1="675.0" y1="195.0" x2="1153.0" y2="195.0" stroke="#e8e8e8" stroke-width="1"/><line x1="675.0" y1="283.3" x2="1153.0" y2="283.3" stroke="#e8e8e8" stroke-width="1"/><line x1="675.0" y1="369.6" x2="1153.0" y2="369.6" stroke="#e8e8e8" stroke-width="1"/><text x="665.0" y="199.0" text-anchor="end" font-family="Liberation Mono" font-size="11.5" fill="#66728e" letter-spacing="-0.9">1.2</text><text x="665.0" y="287.3" text-anchor="end" font-family="Liberation Mono" font-size="11.5" fill="#66728e" letter-spacing="-0.9">0.6</text><text x="665.0" y="373.6" text-anchor="end" font-family="Liberation Mono" font-size="11.5" fill="#66728e" letter-spacing="-0.9">0.0</text><text x="673.5" y="385.0" text-anchor="middle" font-family="Liberation Mono" font-size="11.5" fill="#66728e" letter-spacing="-0.9">09:46:19</text><text x="751.8" y="385.0" text-anchor="middle" font-family="Liberation Mono" font-size="11.5" fill="#66728e" letter-spacing="-0.9">09:46:21</text><text x="831.9" y="385.0" text-anchor="middle" font-family="Liberation Mono" font-size="11.5" fill="#66728e" letter-spacing="-0.9">09:46:23</text><text x="912.0" y="385.0" text-anchor="middle" font-family="Liberation Mono" font-size="11.5" fill="#66728e" letter-spacing="-0.9">09:46:24</text><text x="990.8" y="385.0" text-anchor="middle" font-family="Liberation Mono" font-size="11.5" fill="#66728e" letter-spacing="-0.9">09:46:26</text><text x="1070.9" y="385.0" text-anchor="middle" font-family="Liberation Mono" font-size="11.5" fill="#66728e" letter-spacing="-0.9">09:46:28</text><text x="1151.5" y="385.0" text-anchor="middle" font-family="Liberation Mono" font-size="11.5" fill="#66728e" letter-spacing="-0.9">09:46:29</text><polygon points="675.0,339.9 676.5,341.0 678.0,340.6 679.5,338.9 681.0,338.8 682.5,339.0 684.0,340.2 685.5,339.1 687.0,341.0 688.5,340.8 690.0,342.2 691.5,341.8 693.0,339.2 694.5,339.8 696.0,339.4 697.5,341.0 699.0,340.7 700.5,338.9 702.0,341.1 703.5,339.8 705.0,340.3 706.5,341.6 708.0,339.6 709.5,340.6 711.0,341.3 712.5,342.2 714.0,340.2 715.5,339.2 717.0,338.8 718.5,341.5 720.0,341.9 721.5,341.2 723.0,340.8 724.5,341.7 726.0,340.4 727.5,338.9 729.0,341.0 730.5,341.7 732.0,340.1 733.5,338.8 735.0,339.3 736.5,338.9 738.0,339.2 739.5,340.1 741.0,339.0 742.5,340.7 744.0,341.6 745.5,339.7 747.0,340.0 748.5,342.1 750.0,339.3 751.5,339.5 753.0,340.8 754.5,338.7 756.0,340.0 757.5,342.1 759.0,340.6 760.5,341.1 762.0,341.9 763.5,341.8 765.0,340.1 766.5,339.1 768.0,338.9 769.5,339.5 771.0,339.9 772.5,338.7 774.0,339.1 775.5,338.8 777.0,340.9 778.5,339.6 780.0,340.0 781.5,341.8 783.0,340.4 784.5,339.0 786.0,339.9 787.5,341.7 789.0,338.8 790.5,340.6 792.0,340.7 793.5,340.6 795.0,341.8 796.5,339.6 798.0,339.3 799.5,340.6 801.0,339.9 802.5,341.6 804.0,341.8 805.5,341.6 807.0,339.5 808.5,340.0 810.0,338.8 811.5,339.6 813.0,342.1 814.5,342.1 816.0,342.1 817.5,339.5 819.0,339.4 820.5,340.9 822.0,341.7 823.5,341.1 825.0,339.0 826.5,342.0 828.0,341.4 829.5,339.3 831.0,339.9 832.5,342.2 834.0,340.1 835.5,341.3 837.0,339.2 838.5,342.0 840.0,339.2 841.5,342.2 843.0,340.0 844.5,339.2 846.0,342.2 847.5,340.6 849.0,340.3 850.5,341.7 852.0,339.6 853.5,339.6 855.0,339.6 856.5,339.2 858.0,340.0 859.5,340.8 861.0,340.2 862.5,340.5 864.0,340.6 865.5,340.3 867.0,338.7 868.5,339.3 870.0,341.3 871.5,339.9 873.0,340.7 874.5,339.1 876.0,339.6 877.5,341.5 879.0,340.7 880.5,342.0 882.0,340.9 883.5,340.5 885.0,340.3 886.5,340.4 888.0,341.2 889.5,342.1 891.0,340.7 892.5,341.7 894.0,339.1 895.5,339.0 897.0,339.0 898.5,341.5 900.0,339.3 901.5,341.1 903.0,341.9 904.5,339.5 906.0,340.1 907.5,342.3 909.0,339.3 910.5,340.6 912.0,339.4 913.5,341.3 915.0,340.7 916.5,338.8 918.0,340.9 919.5,338.9 921.0,341.5 922.5,339.1 924.0,338.8 925.5,339.7 927.0,340.2 928.5,341.6 930.0,339.2 931.5,340.8 933.0,339.0 934.5,341.2 936.0,339.0 937.5,341.0 939.0,339.0 940.5,338.9 942.0,340.3 943.5,340.7 945.0,339.7 946.5,340.6 948.0,339.1 949.5,338.9 951.0,339.8 952.5,341.4 954.0,340.5 955.5,339.9 957.0,339.6 958.5,341.3 960.0,339.4 961.5,342.1 963.0,341.6 964.5,340.5 966.0,340.1 967.5,341.2 969.0,339.9 970.5,341.2 972.0,340.2 973.5,338.9 975.0,339.0 976.5,339.6 978.0,339.0 979.5,341.8 981.0,339.7 982.5,339.8 984.0,339.3 985.5,339.6 987.0,342.2 988.5,339.6 990.0,339.8 991.5,338.7 993.0,340.4 994.5,339.4 996.0,338.7 997.5,339.0 999.0,338.9 1000.5,339.8 1002.0,340.8 1003.5,341.4 1005.0,341.3 1006.5,340.1 1008.0,342.2 1009.5,341.3 1011.0,338.9 1012.5,341.9 1014.0,341.3 1015.5,339.2 1017.0,340.5 1018.5,341.6 1020.0,340.8 1021.5,341.2 1023.0,339.5 1024.5,339.2 1026.0,339.1 1027.5,340.7 1029.0,341.0 1030.5,340.5 1032.0,341.6 1033.5,340.5 1035.0,341.1 1036.5,341.4 1038.0,339.0 1039.5,341.3 1041.0,341.4 1042.5,340.5 1044.0,340.4 1045.5,341.5 1047.0,341.0 1048.5,339.2 1050.0,341.4 1051.5,340.7 1053.0,338.9 1054.5,341.1 1056.0,341.1 1057.5,340.6 1059.0,340.4 1060.5,341.9 1062.0,342.2 1063.5,338.8 1065.0,341.7 1066.5,340.3 1068.0,339.5 1069.5,339.5 1071.0,339.2 1072.5,342.1 1074.0,341.7 1075.5,341.9 1077.0,339.5 1078.5,340.5 1080.0,338.7 1081.5,340.3 1083.0,339.2 1084.5,339.8 1086.0,338.7 1087.5,341.7 1089.0,342.0 1090.5,341.9 1092.0,340.0 1093.5,342.3 1095.0,340.0 1096.5,339.7 1098.0,339.1 1099.5,339.7 1101.0,339.6 1102.5,340.5 1104.0,340.0 1105.5,341.9 1107.0,341.0 1108.5,342.1 1110.0,341.3 1111.5,341.3 1113.0,341.4 1114.5,339.7 1116.0,342.0 1117.5,340.4 1119.0,339.8 1120.5,342.2 1122.0,341.1 1123.5,340.7 1125.0,339.3 1126.5,339.4 1128.0,340.5 1129.5,342.0 1131.0,340.3 1132.5,339.4 1134.0,339.9 1135.5,339.6 1137.0,340.8 1138.5,341.4 1140.0,340.2 1141.5,340.1 1143.0,338.9 1144.5,342.2 1146.0,340.5 1147.5,341.8 1149.0,339.7 1150.5,340.1 1152.0,342.1 1152.0,357.8 1150.5,356.3 1149.0,355.6 1147.5,355.5 1146.0,357.0 1144.5,355.2 1143.0,355.7 1141.5,355.9 1140.0,356.6 1138.5,356.2 1137.0,357.9 1135.5,355.6 1134.0,355.0 1132.5,355.0 1131.0,355.2 1129.5,358.3 1128.0,355.5 1126.5,358.0 1125.0,355.3 1123.5,356.1 1122.0,355.8 1120.5,355.6 1119.0,357.4 1117.5,355.9 1116.0,355.2 1114.5,354.9 1113.0,357.0 1111.5,356.3 1110.0,354.9 1108.5,356.7 1107.0,358.0 1105.5,357.6 1104.0,358.1 1102.5,355.4 1101.0,355.7 1099.5,358.1 1098.0,357.7 1096.5,354.9 1095.0,356.2 1093.5,356.8 1092.0,356.1 1090.5,355.7 1089.0,357.3 1087.5,355.1 1086.0,357.4 1084.5,357.7 1083.0,355.9 1081.5,355.8 1080.0,356.5 1078.5,354.8 1077.0,357.9 1075.5,357.2 1074.0,356.5 1072.5,355.2 1071.0,356.6 1069.5,356.8 1068.0,358.1 1066.5,355.7 1065.0,358.2 1063.5,356.4 1062.0,358.1 1060.5,355.4 1059.0,355.1 1057.5,356.4 1056.0,355.7 1054.5,357.2 1053.0,355.7 1051.5,354.7 1050.0,355.8 1048.5,355.6 1047.0,355.0 1045.5,356.9 1044.0,357.2 1042.5,356.1 1041.0,358.2 1039.5,355.4 1038.0,355.7 1036.5,355.6 1035.0,354.9 1033.5,356.6 1032.0,357.4 1030.5,354.7 1029.0,357.2 1027.5,357.0 1026.0,357.7 1024.5,356.0 1023.0,354.8 1021.5,357.2 1020.0,357.9 1018.5,357.7 1017.0,357.7 1015.5,356.6 1014.0,357.6 1012.5,357.0 1011.0,357.7 1009.5,357.0 1008.0,355.2 1006.5,355.9 1005.0,357.9 1003.5,357.1 1002.0,356.6 1000.5,355.5 999.0,354.8 997.5,356.1 996.0,355.7 994.5,356.5 993.0,356.5 991.5,356.1 990.0,356.0 988.5,358.2 987.0,356.7 985.5,358.2 984.0,356.3 982.5,356.4 981.0,355.6 979.5,357.1 978.0,357.7 976.5,355.3 975.0,357.4 973.5,355.2 972.0,356.0 970.5,357.0 969.0,357.7 967.5,358.2 966.0,356.5 964.5,357.7 963.0,356.3 961.5,355.1 960.0,356.4 958.5,356.7 957.0,354.8 955.5,354.8 954.0,355.3 952.5,355.7 951.0,355.8 949.5,355.4 948.0,355.3 946.5,355.6 945.0,355.2 943.5,358.0 942.0,355.9 940.5,357.8 939.0,357.8 937.5,357.6 936.0,358.1 934.5,356.2 933.0,354.9 931.5,357.2 930.0,358.0 928.5,355.6 927.0,358.0 925.5,355.2 924.0,357.5 922.5,355.7 921.0,358.2 919.5,358.2 918.0,356.5 916.5,355.9 915.0,356.3 913.5,354.8 912.0,355.8 910.5,355.9 909.0,356.3 907.5,357.7 906.0,356.5 904.5,358.1 903.0,358.2 901.5,355.2 900.0,357.3 898.5,357.9 897.0,357.1 895.5,355.6 894.0,356.3 892.5,355.2 891.0,358.1 889.5,355.6 888.0,357.9 886.5,358.1 885.0,356.6 883.5,357.2 882.0,356.5 880.5,356.3 879.0,357.4 877.5,356.5 876.0,355.7 874.5,356.7 873.0,357.5 871.5,356.6 870.0,356.7 868.5,356.4 867.0,357.6 865.5,355.4 864.0,354.8 862.5,356.6 861.0,358.0 859.5,358.0 858.0,356.3 856.5,358.0 855.0,356.2 853.5,356.8 852.0,355.8 850.5,355.5 849.0,357.8 847.5,358.1 846.0,357.0 844.5,354.8 843.0,356.7 841.5,357.1 840.0,357.7 838.5,357.6 837.0,355.2 835.5,355.3 834.0,358.1 832.5,356.1 831.0,357.6 829.5,357.5 828.0,356.4 826.5,357.5 825.0,357.1 823.5,357.6 822.0,356.4 820.5,357.9 819.0,355.4 817.5,355.5 816.0,356.0 814.5,358.3 813.0,356.3 811.5,357.2 810.0,355.7 808.5,354.8 807.0,356.6 805.5,357.4 804.0,357.6 802.5,358.2 801.0,355.5 799.5,357.5 798.0,357.5 796.5,356.0 795.0,357.2 793.5,358.2 792.0,354.8 790.5,355.2 789.0,358.1 787.5,355.3 786.0,355.7 784.5,355.1 783.0,356.4 781.5,358.3 780.0,355.1 778.5,356.0 777.0,355.2 775.5,357.8 774.0,356.0 772.5,355.2 771.0,354.9 769.5,355.3 768.0,354.9 766.5,357.0 765.0,356.1 763.5,357.6 762.0,357.5 760.5,354.9 759.0,356.9 757.5,357.2 756.0,356.7 754.5,356.2 753.0,355.6 751.5,356.4 750.0,355.5 748.5,355.2 747.0,357.9 745.5,356.2 744.0,357.8 742.5,357.9 741.0,356.3 739.5,357.8 738.0,355.6 736.5,357.5 735.0,355.1 733.5,356.4 732.0,357.1 730.5,355.7 729.0,358.3 727.5,357.2 726.0,357.1 724.5,358.1 723.0,356.3 721.5,356.8 720.0,355.8 718.5,356.8 717.0,357.1 715.5,356.5 714.0,357.4 712.5,355.1 711.0,355.7 709.5,357.9 708.0,356.8 706.5,357.2 705.0,355.8 703.5,356.8 702.0,356.2 700.5,355.4 699.0,354.9 697.5,356.0 696.0,356.8 694.5,357.6 693.0,355.1 691.5,355.7 690.0,354.9 688.5,356.1 687.0,358.1 685.5,355.5 684.0,357.7 682.5,355.0 681.0,356.3 679.5,356.5 678.0,356.0 676.5,355.0 675.0,355.2" fill="#6abf62"/><circle cx="730" cy="338.5" r="2.5" fill="#6abf62"/><polyline points="675.0,195.5 677.0,196.6 679.0,195.5 681.0,195.5 683.0,195.5 685.0,195.5 687.0,195.5 689.0,195.7 691.0,195.5 693.0,195.5 695.0,195.5 697.0,195.5 699.0,196.7 701.0,195.5 703.0,195.5 705.0,195.9 707.0,195.5 709.0,195.6 711.0,195.5 713.0,195.5 715.0,195.5 717.0,195.5 719.0,195.5 721.0,195.5 723.0,195.5 725.0,195.5 727.0,195.5 729.0,195.5 731.0,195.5 733.0,195.5 735.0,195.5 737.0,195.5 739.0,195.5 741.0,195.5 743.0,195.5 745.0,195.5 747.0,195.5 749.0,195.5 751.0,195.5 753.0,195.5 755.0,195.5 757.0,195.5 759.0,196.1 761.0,195.5 763.0,195.6 765.0,196.1 767.0,195.5 769.0,195.5 771.0,195.5 773.0,195.5 775.0,195.5 777.0,195.5 779.0,195.5 781.0,195.5 783.0,195.5 785.0,195.5 787.0,195.5 789.0,195.5 791.0,195.5 793.0,196.2 795.0,195.5 797.0,195.5 799.0,195.5 801.0,195.5 803.0,195.5 805.0,195.6 807.0,195.5 809.0,195.5 811.0,195.5 813.0,195.5 815.0,195.5 817.0,195.5 819.0,196.6 821.0,195.5 823.0,195.5 825.0,195.5 827.0,195.5 829.0,195.5 831.0,195.5 833.0,195.5 835.0,195.5 837.0,195.5 839.0,195.5 841.0,195.5 843.0,195.5 845.0,195.5 847.0,195.5 849.0,196.3 851.0,195.5 853.0,195.5 855.0,195.5 857.0,196.2 859.0,195.5 861.0,195.5 863.0,195.5 865.0,195.5 867.0,195.5 869.0,195.5 871.0,195.5 873.0,195.5 875.0,195.5 877.0,195.5 879.0,195.5 881.0,195.5 883.0,195.5 885.0,195.5 887.0,195.5 889.0,195.5 891.0,195.5 893.0,195.9 895.0,195.8 897.0,195.5 899.0,195.5 901.0,195.5 903.0,195.5 905.0,195.5 907.0,195.5 909.0,195.5 911.0,195.8 913.0,195.5 915.0,195.5 917.0,196.0 919.0,195.5 921.0,195.5 923.0,195.5 925.0,195.7 927.0,195.5 929.0,195.5 931.0,195.5 933.0,195.5 935.0,195.5 937.0,195.5 939.0,195.5 941.0,195.5 943.0,195.5 945.0,195.5 947.0,196.9 949.0,195.5 951.0,195.5 953.0,195.5 955.0,196.3 957.0,195.5 959.0,196.4 961.0,195.5 963.0,195.9 965.0,195.5 967.0,196.2 969.0,195.5 971.0,195.5 973.0,195.5 975.0,195.5 977.0,195.5 979.0,195.5 981.0,195.5 983.0,195.5 985.0,195.5 987.0,195.5 989.0,195.5 991.0,195.5 993.0,195.9 995.0,195.5 997.0,196.3 999.0,195.5 1001.0,195.5 1003.0,195.5 1005.0,195.5 1007.0,195.5 1009.0,195.5 1011.0,195.5 1013.0,196.4 1015.0,195.5 1017.0,195.5 1019.0,195.5 1021.0,195.5 1023.0,196.1 1025.0,196.2 1027.0,195.5 1029.0,195.5 1031.0,195.5 1033.0,195.5 1035.0,195.5 1037.0,195.5 1039.0,195.5 1041.0,195.5 1043.0,195.5 1045.0,195.5 1047.0,195.5 1049.0,195.5 1051.0,196.0 1053.0,195.5 1055.0,195.5 1057.0,195.5 1059.0,195.5 1061.0,195.5 1063.0,195.5 1065.0,195.8 1067.0,195.5 1069.0,195.5 1071.0,195.5 1073.0,196.3 1075.0,195.5 1077.0,195.5 1079.0,195.5 1081.0,197.0 1083.0,195.5 1085.0,195.5 1087.0,195.5 1089.0,195.5 1091.0,195.5 1093.0,195.5 1095.0,195.5 1097.0,195.5 1099.0,195.5 1101.0,195.5 1103.0,195.7 1105.0,195.5 1107.0,195.5 1109.0,195.8 1111.0,195.5 1113.0,196.0 1115.0,196.0 1117.0,195.5 1119.0,195.5 1121.0,195.5 1123.0,196.9 1125.0,195.5 1127.0,196.5 1129.0,195.5 1131.0,195.5 1133.0,196.5 1135.0,195.5 1137.0,195.5 1139.0,195.5 1141.0,195.5 1143.0,196.3 1145.0,195.5 1147.0,196.7 1149.0,196.3 1151.0,195.5 1153.0,195.5" fill="none" stroke="#3aa6a8" stroke-width="1.5"/><circle cx="749.5" cy="194.5" r="2.5" fill="#3aa6a8"/><polyline points="675.0,201.2 677.0,201.4 679.0,201.8 681.0,200.6 683.0,200.8 685.0,200.8 687.0,200.3 689.0,201.9 691.0,201.7 693.0,201.5 695.0,200.2 697.0,201.8 699.0,201.6 701.0,201.1 703.0,201.5 705.0,201.0 707.0,200.6 709.0,200.4 711.0,200.6 713.0,200.3 715.0,200.8 717.0,201.5 719.0,201.4 721.0,201.7 723.0,201.4 725.0,200.6 727.0,201.1 729.0,200.9 731.0,201.5 733.0,201.1 735.0,200.6 737.0,201.3 739.0,201.8 741.0,200.5 743.0,201.7 745.0,200.1 747.0,200.5 749.0,200.5 751.0,201.4 753.0,201.8 755.0,201.4 757.0,200.6 759.0,201.6 761.0,200.6 763.0,200.5 765.0,201.7 767.0,201.1 769.0,201.3 771.0,201.2 773.0,201.8 775.0,200.8 777.0,201.5 779.0,201.2 781.0,201.5 783.0,200.7 785.0,201.3 787.0,201.0 789.0,200.5 791.0,200.3 793.0,201.1 795.0,200.1 797.0,201.6 799.0,200.2 801.0,200.0 803.0,200.1 805.0,201.6 807.0,200.5 809.0,200.1 811.0,199.9 813.0,199.9 815.0,201.1 817.0,201.0 819.0,201.1 821.0,201.2 823.0,200.0 825.0,200.9 827.0,200.5 829.0,201.3 831.0,201.3 833.0,201.4 835.0,199.9 837.0,201.4 839.0,201.4 841.0,201.5 843.0,200.0 845.0,200.1 847.0,200.0 849.0,199.8 851.0,201.3 853.0,201.2 855.0,200.9 857.0,201.2 859.0,200.9 861.0,200.2 863.0,199.9 865.0,199.9 867.0,201.1 869.0,200.1 871.0,200.3 873.0,200.4 875.0,199.7 877.0,200.1 879.0,200.2 881.0,200.9 883.0,200.3 885.0,200.2 887.0,201.4 889.0,200.5 891.0,201.2 893.0,200.7 895.0,199.7 897.0,200.3 899.0,200.4 901.0,201.0 903.0,200.2 905.0,200.8 907.0,200.5 909.0,200.0 911.0,201.1 913.0,199.7 915.0,201.0 917.0,199.8 919.0,199.5 921.0,199.9 923.0,200.9 925.0,201.3 927.0,199.5 929.0,200.4 931.0,200.4 933.0,200.9 935.0,199.8 937.0,200.4 939.0,200.1 941.0,201.0 943.0,199.9 945.0,201.2 947.0,200.0 949.0,199.8 951.0,200.7 953.0,200.3 955.0,199.6 957.0,200.6 959.0,199.6 961.0,200.8 963.0,200.7 965.0,200.8 967.0,200.5 969.0,200.0 971.0,200.1 973.0,200.1 975.0,201.0 977.0,199.5 979.0,200.9 981.0,199.4 983.0,199.7 985.0,199.8 987.0,200.9 989.0,200.2 991.0,200.0 993.0,200.9 995.0,199.7 997.0,200.1 999.0,200.2 1001.0,200.6 1003.0,200.6 1005.0,200.4 1007.0,199.9 1009.0,199.8 1011.0,199.5 1013.0,200.8 1015.0,200.4 1017.0,200.6 1019.0,199.5 1021.0,200.0 1023.0,200.6 1025.0,200.2 1027.0,199.4 1029.0,200.0 1031.0,200.8 1033.0,199.6 1035.0,199.5 1037.0,199.7 1039.0,200.4 1041.0,200.7 1043.0,199.4 1045.0,199.4 1047.0,199.6 1049.0,199.7 1051.0,200.1 1053.0,199.4 1055.0,199.7 1057.0,199.4 1059.0,200.9 1061.0,200.4 1063.0,199.3 1065.0,200.8 1067.0,199.3 1069.0,199.8 1071.0,200.8 1073.0,200.5 1075.0,200.4 1077.0,199.8 1079.0,199.4 1081.0,200.2 1083.0,199.2 1085.0,199.4 1087.0,199.7 1089.0,199.1 1091.0,199.7 1093.0,200.4 1095.0,200.2 1097.0,199.9 1099.0,200.1 1101.0,199.8 1103.0,199.2 1105.0,200.0 1107.0,199.7 1109.0,200.3 1111.0,200.6 1113.0,199.7 1115.0,200.0 1117.0,200.3 1119.0,199.7 1121.0,199.3 1123.0,200.2 1125.0,200.5 1127.0,200.3 1129.0,200.1 1131.0,200.4 1133.0,200.1 1135.0,200.0 1137.0,199.7 1139.0,199.4 1141.0,200.0 1143.0,199.0 1145.0,199.6 1147.0,200.2 1149.0,200.1 1151.0,199.9 1153.0,199.3" fill="none" stroke="#a89a55" stroke-width="1.5"/><circle cx="858" cy="199.3" r="2.5" fill="#a89a55"/><line x1="675" y1="369.6" x2="1153" y2="369.6" stroke="#e8506a" stroke-width="1.5"/><circle cx="675.5" cy="369.5" r="3" fill="#e8506a"/><line x1="64.5" y1="464.5" x2="64.5" y2="638.5" stroke="#e8e8e8" stroke-width="1"/><line x1="142.5" y1="464.5" x2="142.5" y2="638.5" stroke="#e8e8e8" stroke-width="1"/><line x1="222.5" y1="464.5" x2="222.5" y2="638.5" stroke="#e8e8e8" stroke-width="1"/><line x1="302.5" y1="464.5" x2="302.5" y2="638.5" stroke="#e8e8e8" stroke-width="1"/><line x1="381.5" y1="464.5" x2="381.5" y2="638.5" stroke="#e8e8e8" stroke-width="1"/><line x1="461.5" y1="464.5" x2="461.5" y2="638.5" stroke="#e8e8e8" stroke-width="1"/><line x1="541.5" y1="464.5" x2="541.5" y2="638.5" stroke="#e8e8e8" stroke-width="1"/><line x1="64.5" y1="464.5" x2="541.5" y2="464.5" stroke="#e8e8e8" stroke-width="1"/><line x1="64.5" y1="551.5" x2="541.5" y2="551.5" stroke="#e8e8e8" stroke-width="1"/><line x1="64.5" y1="638.5" x2="541.5" y2="638.5" stroke="#e8e8e8" stroke-width="1"/><text x="56.0" y="468.5" text-anchor="end" font-family="Liberation Mono" font-size="11.5" fill="#66728e" letter-spacing="-0.9">10</text><text x="56.0" y="555.5" text-anchor="end" font-family="Liberation Mono" font-size="11.5" fill="#66728e" letter-spacing="-0.9">5</text><text x="56.0" y="642.5" text-anchor="end" font-family="Liberation Mono" font-size="11.5" fill="#66728e" letter-spacing="-0.9">0</text><text x="63.0" y="654.4" text-anchor="middle" font-family="Liberation Mono" font-size="11.5" fill="#66728e" letter-spacing="-0.9">0.000Hz</text><text x="141.0" y="654.4" text-anchor="middle" font-family="Liberation Mono" font-size="11.5" fill="#66728e" letter-spacing="-0.9">832.667Hz</text><text x="221.0" y="654.4" text-anchor="middle" font-family="Liberation Mono" font-size="11.5" fill="#66728e" letter-spacing="-0.9">1665.333Hz</text><text x="301.0" y="654.4" text-anchor="middle" font-family="Liberation Mono" font-size="11.5" fill="#66728e" letter-spacing="-0.9">2498.000Hz</text><text x="380.0" y="654.4" text-anchor="middle" font-family="Liberation Mono" font-size="11.5" fill="#66728e" letter-spacing="-0.9">3330.667Hz</text><text x="460.0" y="654.4" text-anchor="middle" font-family="Liberation Mono" font-size="11.5" fill="#66728e" letter-spacing="-0.9">4163.333Hz</text><text x="540.0" y="654.4" text-anchor="middle" font-family="Liberation Mono" font-size="11.5" fill="#66728e" letter-spacing="-0.9">4996.000Hz</text><line x1="64.5" y1="464.5" x2="64.5" y2="638.5" stroke="#f2b212" stroke-width="1.4"/><line x1="64.5" y1="638.5" x2="541.5" y2="638.5" stroke="#f2b212" stroke-width="1.4"/><circle cx="64.5" cy="464.5" r="3" fill="#f2b212"/><circle cx="64.5" cy="620.7" r="2.8" fill="#4a62b8"/><text x="67.0" y="463.0" text-anchor="start" font-family="Liberation Mono" font-size="11.5" fill="#f2b212" letter-spacing="-0.9">[0Hz,10.1V]</text><text x="67.0" y="620.0" text-anchor="start" font-family="Liberation Mono" font-size="11.5" fill="#4a62b8" letter-spacing="-0.9">[0Hz,1.09Vk]</text><line x1="673.0" y1="463.5" x2="673.0" y2="637.5" stroke="#e8e8e8" stroke-width="1"/><line x1="751.3" y1="463.5" x2="751.3" y2="637.5" stroke="#e8e8e8" stroke-width="1"/><line x1="831.4" y1="463.5" x2="831.4" y2="637.5" stroke="#e8e8e8" stroke-width="1"/><line x1="911.2" y1="463.5" x2="911.2" y2="637.5" stroke="#e8e8e8" stroke-width="1"/><line x1="990.3" y1="463.5" x2="990.3" y2="637.5" stroke="#e8e8e8" stroke-width="1"/><line x1="1070.1" y1="463.5" x2="1070.1" y2="637.5" stroke="#e8e8e8" stroke-width="1"/><line x1="1151.0" y1="463.5" x2="1151.0" y2="637.5" stroke="#e8e8e8" stroke-width="1"/><line x1="673.0" y1="463.5" x2="1151.0" y2="463.5" stroke="#e8e8e8" stroke-width="1"/><line x1="673.0" y1="551.0" x2="1151.0" y2="551.0" stroke="#e8e8e8" stroke-width="1"/><line x1="673.0" y1="637.5" x2="1151.0" y2="637.5" stroke="#e8e8e8" stroke-width="1"/><text x="664.0" y="467.5" text-anchor="end" font-family="Liberation Mono" font-size="11.5" fill="#66728e" letter-spacing="-0.9">1.2</text><text x="664.0" y="555.0" text-anchor="end" font-family="Liberation Mono" font-size="11.5" fill="#66728e" letter-spacing="-0.9">0.6</text><text x="664.0" y="641.5" text-anchor="end" font-family="Liberation Mono" font-size="11.5" fill="#66728e" letter-spacing="-0.9">0.0</text><text x="671.5" y="653.5" text-anchor="middle" font-family="Liberation Mono" font-size="11.5" fill="#66728e" letter-spacing="-0.9">0.000Hz</text><text x="749.8" y="653.5" text-anchor="middle" font-family="Liberation Mono" font-size="11.5" fill="#66728e" letter-spacing="-0.9">832.667Hz</text><text x="829.9" y="653.5" text-anchor="middle" font-family="Liberation Mono" font-size="11.5" fill="#66728e" letter-spacing="-0.9">1665.333Hz</text><text x="909.7" y="653.5" text-anchor="middle" font-family="Liberation Mono" font-size="11.5" fill="#66728e" letter-spacing="-0.9">2498.000Hz</text><text x="988.8" y="653.5" text-anchor="middle" font-family="Liberation Mono" font-size="11.5" fill="#66728e" letter-spacing="-0.9">3330.667Hz</text><text x="1068.6" y="653.5" text-anchor="middle" font-family="Liberation Mono" font-size="11.5" fill="#66728e" letter-spacing="-0.9">4163.333Hz</text><text x="1149.5" y="653.5" text-anchor="middle" font-family="Liberation Mono" font-size="11.5" fill="#66728e" letter-spacing="-0.9">4996.000Hz</text><line x1="673.5" y1="463.5" x2="673.5" y2="637.5" stroke="#3aa6a8" stroke-width="1.3"/><line x1="673" y1="637.5" x2="1151" y2="637.5" stroke="#e8506a" stroke-width="1.3"/><circle cx="673.5" cy="462.8" r="2.6" fill="#3aa6a8"/><circle cx="673.5" cy="468.3" r="2.6" fill="#a89a55"/><circle cx="673.5" cy="616" r="2.6" fill="#6abf62"/><circle cx="673.5" cy="637" r="2.6" fill="#3aa6a8"/><circle cx="682" cy="636" r="2.6" fill="#6abf62"/><text x="676.0" y="462.0" text-anchor="start" font-family="Liberation Mono" font-size="11.5" fill="#3aa6a8" letter-spacing="-0.9">[0Hz,1.21V]</text><text x="676.0" y="467.0" text-anchor="start" font-family="Liberation Mono" font-size="11.5" fill="#a89a55" letter-spacing="-0.9">[0Hz,1.17V]</text><text x="676.0" y="616.0" text-anchor="start" font-family="Liberation Mono" font-size="11.5" fill="#6abf62" letter-spacing="-0.9">[0Hz,0.152V]</text><text x="678.0" y="636.0" text-anchor="start" font-family="Liberation Mono" font-size="11.5" fill="#6abf62" letter-spacing="-0.9">[18.28Hz,0.0021V]</text><text x="683.0" y="637.0" text-anchor="start" font-family="Liberation Mono" font-size="11.5" fill="#3aa6a8" letter-spacing="-0.9">[0Hz,0.00482V]</text><line x1="1381.77" y1="276.80" x2="1369.64" y2="283.80" stroke="#1ab0c8" stroke-width="2"/><line x1="1404.03" y1="263.95" x2="1394.41" y2="269.50" stroke="#d2d2d2" stroke-width="1"/><line x1="1379.55" y1="272.54" x2="1366.86" y2="278.46" stroke="#1ab0c8" stroke-width="2"/><line x1="1402.85" y1="261.68" x2="1392.79" y2="266.37" stroke="#d2d2d2" stroke-width="1"/><line x1="1377.72" y1="268.11" x2="1364.56" y2="272.90" stroke="#1ab0c8" stroke-width="2"/><line x1="1401.87" y1="259.32" x2="1391.44" y2="263.12" stroke="#d2d2d2" stroke-width="1"/><line x1="1376.27" y1="263.54" x2="1362.75" y2="267.16" stroke="#1ab0c8" stroke-width="2"/><line x1="1401.10" y1="256.88" x2="1390.38" y2="259.76" stroke="#d2d2d2" stroke-width="1"/><line x1="1375.24" y1="258.85" x2="1360.46" y2="261.46" stroke="#cdcdcd" stroke-width="1"/><line x1="1400.55" y1="254.39" x2="1389.61" y2="256.32" stroke="#d2d2d2" stroke-width="1"/><line x1="1374.61" y1="254.09" x2="1359.67" y2="255.40" stroke="#cdcdcd" stroke-width="1"/><line x1="1400.21" y1="251.85" x2="1389.15" y2="252.82" stroke="#d2d2d2" stroke-width="1"/><line x1="1374.40" y1="249.30" x2="1359.40" y2="249.30" stroke="#cdcdcd" stroke-width="1"/><line x1="1400.10" y1="249.30" x2="1389.00" y2="249.30" stroke="#d2d2d2" stroke-width="1"/><line x1="1374.61" y1="244.51" x2="1359.67" y2="243.20" stroke="#cdcdcd" stroke-width="1"/><line x1="1400.21" y1="246.75" x2="1389.15" y2="245.78" stroke="#d2d2d2" stroke-width="1"/><line x1="1375.24" y1="239.75" x2="1360.46" y2="237.14" stroke="#cdcdcd" stroke-width="1"/><line x1="1400.55" y1="244.21" x2="1389.61" y2="242.28" stroke="#d2d2d2" stroke-width="1"/><line x1="1376.27" y1="235.06" x2="1361.79" y2="231.18" stroke="#cdcdcd" stroke-width="1"/><line x1="1401.10" y1="241.72" x2="1390.38" y2="238.84" stroke="#d2d2d2" stroke-width="1"/><line x1="1377.72" y1="230.49" x2="1363.62" y2="225.36" stroke="#cdcdcd" stroke-width="1"/><line x1="1401.87" y1="239.28" x2="1391.44" y2="235.48" stroke="#d2d2d2" stroke-width="1"/><line x1="1379.55" y1="226.06" x2="1365.96" y2="219.72" stroke="#cdcdcd" stroke-width="1"/><line x1="1402.85" y1="236.92" x2="1392.79" y2="232.23" stroke="#d2d2d2" stroke-width="1"/><line x1="1381.77" y1="221.80" x2="1368.78" y2="214.30" stroke="#cdcdcd" stroke-width="1"/><line x1="1404.03" y1="234.65" x2="1394.41" y2="229.10" stroke="#d2d2d2" stroke-width="1"/><line x1="1384.35" y1="217.75" x2="1372.06" y2="209.15" stroke="#cdcdcd" stroke-width="1"/><line x1="1405.40" y1="232.49" x2="1396.31" y2="226.13" stroke="#d2d2d2" stroke-width="1"/><line x1="1387.27" y1="213.95" x2="1375.78" y2="204.30" stroke="#cdcdcd" stroke-width="1"/><line x1="1406.95" y1="230.47" x2="1398.45" y2="223.33" stroke="#d2d2d2" stroke-width="1"/><line x1="1390.51" y1="210.41" x2="1379.90" y2="199.80" stroke="#cdcdcd" stroke-width="1"/><line x1="1408.68" y1="228.58" x2="1400.83" y2="220.73" stroke="#d2d2d2" stroke-width="1"/><line x1="1394.05" y1="207.17" x2="1384.40" y2="195.68" stroke="#cdcdcd" stroke-width="1"/><line x1="1410.57" y1="226.85" x2="1403.43" y2="218.35" stroke="#d2d2d2" stroke-width="1"/><line x1="1397.85" y1="204.25" x2="1389.25" y2="191.96" stroke="#cdcdcd" stroke-width="1"/><line x1="1412.59" y1="225.30" x2="1406.23" y2="216.21" stroke="#d2d2d2" stroke-width="1"/><line x1="1401.90" y1="201.67" x2="1394.40" y2="188.68" stroke="#cdcdcd" stroke-width="1"/><line x1="1414.75" y1="223.93" x2="1409.20" y2="214.31" stroke="#d2d2d2" stroke-width="1"/><line x1="1406.16" y1="199.45" x2="1399.82" y2="185.86" stroke="#cdcdcd" stroke-width="1"/><line x1="1417.02" y1="222.75" x2="1412.33" y2="212.69" stroke="#d2d2d2" stroke-width="1"/><line x1="1410.59" y1="197.62" x2="1405.46" y2="183.52" stroke="#cdcdcd" stroke-width="1"/><line x1="1419.38" y1="221.77" x2="1415.58" y2="211.34" stroke="#d2d2d2" stroke-width="1"/><line x1="1415.16" y1="196.17" x2="1411.28" y2="181.69" stroke="#cdcdcd" stroke-width="1"/><line x1="1421.82" y1="221.00" x2="1418.94" y2="210.28" stroke="#d2d2d2" stroke-width="1"/><line x1="1419.85" y1="195.14" x2="1417.24" y2="180.36" stroke="#cdcdcd" stroke-width="1"/><line x1="1424.31" y1="220.45" x2="1422.38" y2="209.51" stroke="#d2d2d2" stroke-width="1"/><line x1="1424.61" y1="194.51" x2="1423.30" y2="179.57" stroke="#cdcdcd" stroke-width="1"/><line x1="1426.85" y1="220.11" x2="1425.88" y2="209.05" stroke="#d2d2d2" stroke-width="1"/><line x1="1429.40" y1="194.30" x2="1429.40" y2="179.30" stroke="#cdcdcd" stroke-width="1"/><line x1="1429.40" y1="220.00" x2="1429.40" y2="208.90" stroke="#d2d2d2" stroke-width="1"/><line x1="1434.19" y1="194.51" x2="1435.50" y2="179.57" stroke="#cdcdcd" stroke-width="1"/><line x1="1431.95" y1="220.11" x2="1432.92" y2="209.05" stroke="#d2d2d2" stroke-width="1"/><line x1="1438.95" y1="195.14" x2="1441.56" y2="180.36" stroke="#cdcdcd" stroke-width="1"/><line x1="1434.49" y1="220.45" x2="1436.42" y2="209.51" stroke="#d2d2d2" stroke-width="1"/><line x1="1443.64" y1="196.17" x2="1447.52" y2="181.69" stroke="#cdcdcd" stroke-width="1"/><line x1="1436.98" y1="221.00" x2="1439.86" y2="210.28" stroke="#d2d2d2" stroke-width="1"/><line x1="1448.21" y1="197.62" x2="1453.34" y2="183.52" stroke="#cdcdcd" stroke-width="1"/><line x1="1439.42" y1="221.77" x2="1443.22" y2="211.34" stroke="#d2d2d2" stroke-width="1"/><line x1="1452.64" y1="199.45" x2="1458.98" y2="185.86" stroke="#cdcdcd" stroke-width="1"/><line x1="1441.78" y1="222.75" x2="1446.47" y2="212.69" stroke="#d2d2d2" stroke-width="1"/><line x1="1456.90" y1="201.67" x2="1464.40" y2="188.68" stroke="#cdcdcd" stroke-width="1"/><line x1="1444.05" y1="223.93" x2="1449.60" y2="214.31" stroke="#d2d2d2" stroke-width="1"/><line x1="1460.95" y1="204.25" x2="1469.55" y2="191.96" stroke="#cdcdcd" stroke-width="1"/><line x1="1446.21" y1="225.30" x2="1452.57" y2="216.21" stroke="#d2d2d2" stroke-width="1"/><line x1="1464.75" y1="207.17" x2="1474.40" y2="195.68" stroke="#cdcdcd" stroke-width="1"/><line x1="1448.23" y1="226.85" x2="1455.37" y2="218.35" stroke="#d2d2d2" stroke-width="1"/><line x1="1468.29" y1="210.41" x2="1478.90" y2="199.80" stroke="#cdcdcd" stroke-width="1"/><line x1="1450.12" y1="228.58" x2="1457.97" y2="220.73" stroke="#d2d2d2" stroke-width="1"/><line x1="1471.53" y1="213.95" x2="1483.02" y2="204.30" stroke="#cdcdcd" stroke-width="1"/><line x1="1451.85" y1="230.47" x2="1460.35" y2="223.33" stroke="#d2d2d2" stroke-width="1"/><line x1="1474.45" y1="217.75" x2="1486.74" y2="209.15" stroke="#cdcdcd" stroke-width="1"/><line x1="1453.40" y1="232.49" x2="1462.49" y2="226.13" stroke="#d2d2d2" stroke-width="1"/><line x1="1477.03" y1="221.80" x2="1490.02" y2="214.30" stroke="#cdcdcd" stroke-width="1"/><line x1="1454.77" y1="234.65" x2="1464.39" y2="229.10" stroke="#d2d2d2" stroke-width="1"/><line x1="1479.25" y1="226.06" x2="1492.84" y2="219.72" stroke="#cdcdcd" stroke-width="1"/><line x1="1455.95" y1="236.92" x2="1466.01" y2="232.23" stroke="#d2d2d2" stroke-width="1"/><line x1="1481.08" y1="230.49" x2="1495.18" y2="225.36" stroke="#cdcdcd" stroke-width="1"/><line x1="1456.93" y1="239.28" x2="1467.36" y2="235.48" stroke="#d2d2d2" stroke-width="1"/><line x1="1482.53" y1="235.06" x2="1497.01" y2="231.18" stroke="#cdcdcd" stroke-width="1"/><line x1="1457.70" y1="241.72" x2="1468.42" y2="238.84" stroke="#d2d2d2" stroke-width="1"/><line x1="1483.56" y1="239.75" x2="1498.34" y2="237.14" stroke="#cdcdcd" stroke-width="1"/><line x1="1458.25" y1="244.21" x2="1469.19" y2="242.28" stroke="#d2d2d2" stroke-width="1"/><line x1="1484.19" y1="244.51" x2="1499.13" y2="243.20" stroke="#cdcdcd" stroke-width="1"/><line x1="1458.59" y1="246.75" x2="1469.65" y2="245.78" stroke="#d2d2d2" stroke-width="1"/><line x1="1484.40" y1="249.30" x2="1499.40" y2="249.30" stroke="#cdcdcd" stroke-width="1"/><line x1="1458.70" y1="249.30" x2="1469.80" y2="249.30" stroke="#d2d2d2" stroke-width="1"/><line x1="1484.19" y1="254.09" x2="1499.13" y2="255.40" stroke="#cdcdcd" stroke-width="1"/><line x1="1458.59" y1="251.85" x2="1469.65" y2="252.82" stroke="#d2d2d2" stroke-width="1"/><line x1="1483.56" y1="258.85" x2="1498.34" y2="261.46" stroke="#cdcdcd" stroke-width="1"/><line x1="1458.25" y1="254.39" x2="1469.19" y2="256.32" stroke="#d2d2d2" stroke-width="1"/><line x1="1482.53" y1="263.54" x2="1497.01" y2="267.42" stroke="#cdcdcd" stroke-width="1"/><line x1="1457.70" y1="256.88" x2="1468.42" y2="259.76" stroke="#d2d2d2" stroke-width="1"/><line x1="1481.08" y1="268.11" x2="1495.18" y2="273.24" stroke="#cdcdcd" stroke-width="1"/><line x1="1456.93" y1="259.32" x2="1467.36" y2="263.12" stroke="#d2d2d2" stroke-width="1"/><line x1="1479.25" y1="272.54" x2="1492.84" y2="278.88" stroke="#cdcdcd" stroke-width="1"/><line x1="1455.95" y1="261.68" x2="1466.01" y2="266.37" stroke="#d2d2d2" stroke-width="1"/><line x1="1477.03" y1="276.80" x2="1490.02" y2="284.30" stroke="#cdcdcd" stroke-width="1"/><line x1="1454.77" y1="263.95" x2="1464.39" y2="269.50" stroke="#d2d2d2" stroke-width="1"/><line x1="1375.24" y1="258.85" x2="1355.54" y2="262.32" stroke="#9a35a2" stroke-width="3"/><text x="1409.9" y="268.3" text-anchor="middle" font-family="Liberation Sans" font-size="11" fill="#c4c4c4">0</text><text x="1411.0" y="246.3" text-anchor="middle" font-family="Liberation Sans" font-size="11" fill="#c4c4c4">25</text><text x="1429.4" y="230.8" text-anchor="middle" font-family="Liberation Sans" font-size="11" fill="#c4c4c4">50</text><text x="1446.0" y="246.3" text-anchor="middle" font-family="Liberation Sans" font-size="11" fill="#c4c4c4">75</text><text x="1443.4" y="268.3" text-anchor="middle" font-family="Liberation Sans" font-size="11" fill="#c4c4c4">100</text><line x1="1381.77" y1="461.80" x2="1369.64" y2="468.80" stroke="#1ab0c8" stroke-width="2"/><line x1="1404.03" y1="448.95" x2="1394.41" y2="454.50" stroke="#d2d2d2" stroke-width="1"/><line x1="1379.55" y1="457.54" x2="1366.86" y2="463.46" stroke="#1ab0c8" stroke-width="2"/><line x1="1402.85" y1="446.68" x2="1392.79" y2="451.37" stroke="#d2d2d2" stroke-width="1"/><line x1="1377.72" y1="453.11" x2="1364.56" y2="457.90" stroke="#1ab0c8" stroke-width="2"/><line x1="1401.87" y1="444.32" x2="1391.44" y2="448.12" stroke="#d2d2d2" stroke-width="1"/><line x1="1376.27" y1="448.54" x2="1362.75" y2="452.16" stroke="#1ab0c8" stroke-width="2"/><line x1="1401.10" y1="441.88" x2="1390.38" y2="444.76" stroke="#d2d2d2" stroke-width="1"/><line x1="1375.24" y1="443.85" x2="1361.45" y2="446.28" stroke="#1ab0c8" stroke-width="2"/><line x1="1400.55" y1="439.39" x2="1389.61" y2="441.32" stroke="#d2d2d2" stroke-width="1"/><line x1="1374.61" y1="439.09" x2="1359.67" y2="440.40" stroke="#cdcdcd" stroke-width="1"/><line x1="1400.21" y1="436.85" x2="1389.15" y2="437.82" stroke="#d2d2d2" stroke-width="1"/><line x1="1374.40" y1="434.30" x2="1359.40" y2="434.30" stroke="#cdcdcd" stroke-width="1"/><line x1="1400.10" y1="434.30" x2="1389.00" y2="434.30" stroke="#d2d2d2" stroke-width="1"/><line x1="1374.61" y1="429.51" x2="1359.67" y2="428.20" stroke="#cdcdcd" stroke-width="1"/><line x1="1400.21" y1="431.75" x2="1389.15" y2="430.78" stroke="#d2d2d2" stroke-width="1"/><line x1="1375.24" y1="424.75" x2="1360.46" y2="422.14" stroke="#cdcdcd" stroke-width="1"/><line x1="1400.55" y1="429.21" x2="1389.61" y2="427.28" stroke="#d2d2d2" stroke-width="1"/><line x1="1376.27" y1="420.06" x2="1361.79" y2="416.18" stroke="#cdcdcd" stroke-width="1"/><line x1="1401.10" y1="426.72" x2="1390.38" y2="423.84" stroke="#d2d2d2" stroke-width="1"/><line x1="1377.72" y1="415.49" x2="1363.62" y2="410.36" stroke="#cdcdcd" stroke-width="1"/><line x1="1401.87" y1="424.28" x2="1391.44" y2="420.48" stroke="#d2d2d2" stroke-width="1"/><line x1="1379.55" y1="411.06" x2="1365.96" y2="404.72" stroke="#cdcdcd" stroke-width="1"/><line x1="1402.85" y1="421.92" x2="1392.79" y2="417.23" stroke="#d2d2d2" stroke-width="1"/><line x1="1381.77" y1="406.80" x2="1368.78" y2="399.30" stroke="#cdcdcd" stroke-width="1"/><line x1="1404.03" y1="419.65" x2="1394.41" y2="414.10" stroke="#d2d2d2" stroke-width="1"/><line x1="1384.35" y1="402.75" x2="1372.06" y2="394.15" stroke="#cdcdcd" stroke-width="1"/><line x1="1405.40" y1="417.49" x2="1396.31" y2="411.13" stroke="#d2d2d2" stroke-width="1"/><line x1="1387.27" y1="398.95" x2="1375.78" y2="389.30" stroke="#cdcdcd" stroke-width="1"/><line x1="1406.95" y1="415.47" x2="1398.45" y2="408.33" stroke="#d2d2d2" stroke-width="1"/><line x1="1390.51" y1="395.41" x2="1379.90" y2="384.80" stroke="#cdcdcd" stroke-width="1"/><line x1="1408.68" y1="413.58" x2="1400.83" y2="405.73" stroke="#d2d2d2" stroke-width="1"/><line x1="1394.05" y1="392.17" x2="1384.40" y2="380.68" stroke="#cdcdcd" stroke-width="1"/><line x1="1410.57" y1="411.85" x2="1403.43" y2="403.35" stroke="#d2d2d2" stroke-width="1"/><line x1="1397.85" y1="389.25" x2="1389.25" y2="376.96" stroke="#cdcdcd" stroke-width="1"/><line x1="1412.59" y1="410.30" x2="1406.23" y2="401.21" stroke="#d2d2d2" stroke-width="1"/><line x1="1401.90" y1="386.67" x2="1394.40" y2="373.68" stroke="#cdcdcd" stroke-width="1"/><line x1="1414.75" y1="408.93" x2="1409.20" y2="399.31" stroke="#d2d2d2" stroke-width="1"/><line x1="1406.16" y1="384.45" x2="1399.82" y2="370.86" stroke="#cdcdcd" stroke-width="1"/><line x1="1417.02" y1="407.75" x2="1412.33" y2="397.69" stroke="#d2d2d2" stroke-width="1"/><line x1="1410.59" y1="382.62" x2="1405.46" y2="368.52" stroke="#cdcdcd" stroke-width="1"/><line x1="1419.38" y1="406.77" x2="1415.58" y2="396.34" stroke="#d2d2d2" stroke-width="1"/><line x1="1415.16" y1="381.17" x2="1411.28" y2="366.69" stroke="#cdcdcd" stroke-width="1"/><line x1="1421.82" y1="406.00" x2="1418.94" y2="395.28" stroke="#d2d2d2" stroke-width="1"/><line x1="1419.85" y1="380.14" x2="1417.24" y2="365.36" stroke="#cdcdcd" stroke-width="1"/><line x1="1424.31" y1="405.45" x2="1422.38" y2="394.51" stroke="#d2d2d2" stroke-width="1"/><line x1="1424.61" y1="379.51" x2="1423.30" y2="364.57" stroke="#cdcdcd" stroke-width="1"/><line x1="1426.85" y1="405.11" x2="1425.88" y2="394.05" stroke="#d2d2d2" stroke-width="1"/><line x1="1429.40" y1="379.30" x2="1429.40" y2="364.30" stroke="#cdcdcd" stroke-width="1"/><line x1="1429.40" y1="405.00" x2="1429.40" y2="393.90" stroke="#d2d2d2" stroke-width="1"/><line x1="1434.19" y1="379.51" x2="1435.50" y2="364.57" stroke="#cdcdcd" stroke-width="1"/><line x1="1431.95" y1="405.11" x2="1432.92" y2="394.05" stroke="#d2d2d2" stroke-width="1"/><line x1="1438.95" y1="380.14" x2="1441.56" y2="365.36" stroke="#cdcdcd" stroke-width="1"/><line x1="1434.49" y1="405.45" x2="1436.42" y2="394.51" stroke="#d2d2d2" stroke-width="1"/><line x1="1443.64" y1="381.17" x2="1447.52" y2="366.69" stroke="#cdcdcd" stroke-width="1"/><line x1="1436.98" y1="406.00" x2="1439.86" y2="395.28" stroke="#d2d2d2" stroke-width="1"/><line x1="1448.21" y1="382.62" x2="1453.34" y2="368.52" stroke="#cdcdcd" stroke-width="1"/><line x1="1439.42" y1="406.77" x2="1443.22" y2="396.34" stroke="#d2d2d2" stroke-width="1"/><line x1="1452.64" y1="384.45" x2="1458.98" y2="370.86" stroke="#cdcdcd" stroke-width="1"/><line x1="1441.78" y1="407.75" x2="1446.47" y2="397.69" stroke="#d2d2d2" stroke-width="1"/><line x1="1456.90" y1="386.67" x2="1464.40" y2="373.68" stroke="#cdcdcd" stroke-width="1"/><line x1="1444.05" y1="408.93" x2="1449.60" y2="399.31" stroke="#d2d2d2" stroke-width="1"/><line x1="1460.95" y1="389.25" x2="1469.55" y2="376.96" stroke="#cdcdcd" stroke-width="1"/><line x1="1446.21" y1="410.30" x2="1452.57" y2="401.21" stroke="#d2d2d2" stroke-width="1"/><line x1="1464.75" y1="392.17" x2="1474.40" y2="380.68" stroke="#cdcdcd" stroke-width="1"/><line x1="1448.23" y1="411.85" x2="1455.37" y2="403.35" stroke="#d2d2d2" stroke-width="1"/><line x1="1468.29" y1="395.41" x2="1478.90" y2="384.80" stroke="#cdcdcd" stroke-width="1"/><line x1="1450.12" y1="413.58" x2="1457.97" y2="405.73" stroke="#d2d2d2" stroke-width="1"/><line x1="1471.53" y1="398.95" x2="1483.02" y2="389.30" stroke="#cdcdcd" stroke-width="1"/><line x1="1451.85" y1="415.47" x2="1460.35" y2="408.33" stroke="#d2d2d2" stroke-width="1"/><line x1="1474.45" y1="402.75" x2="1486.74" y2="394.15" stroke="#cdcdcd" stroke-width="1"/><line x1="1453.40" y1="417.49" x2="1462.49" y2="411.13" stroke="#d2d2d2" stroke-width="1"/><line x1="1477.03" y1="406.80" x2="1490.02" y2="399.30" stroke="#cdcdcd" stroke-width="1"/><line x1="1454.77" y1="419.65" x2="1464.39" y2="414.10" stroke="#d2d2d2" stroke-width="1"/><line x1="1479.25" y1="411.06" x2="1492.84" y2="404.72" stroke="#cdcdcd" stroke-width="1"/><line x1="1455.95" y1="421.92" x2="1466.01" y2="417.23" stroke="#d2d2d2" stroke-width="1"/><line x1="1481.08" y1="415.49" x2="1495.18" y2="410.36" stroke="#cdcdcd" stroke-width="1"/><line x1="1456.93" y1="424.28" x2="1467.36" y2="420.48" stroke="#d2d2d2" stroke-width="1"/><line x1="1482.53" y1="420.06" x2="1497.01" y2="416.18" stroke="#cdcdcd" stroke-width="1"/><line x1="1457.70" y1="426.72" x2="1468.42" y2="423.84" stroke="#d2d2d2" stroke-width="1"/><line x1="1483.56" y1="424.75" x2="1498.34" y2="422.14" stroke="#cdcdcd" stroke-width="1"/><line x1="1458.25" y1="429.21" x2="1469.19" y2="427.28" stroke="#d2d2d2" stroke-width="1"/><line x1="1484.19" y1="429.51" x2="1499.13" y2="428.20" stroke="#cdcdcd" stroke-width="1"/><line x1="1458.59" y1="431.75" x2="1469.65" y2="430.78" stroke="#d2d2d2" stroke-width="1"/><line x1="1484.40" y1="434.30" x2="1499.40" y2="434.30" stroke="#cdcdcd" stroke-width="1"/><line x1="1458.70" y1="434.30" x2="1469.80" y2="434.30" stroke="#d2d2d2" stroke-width="1"/><line x1="1484.19" y1="439.09" x2="1499.13" y2="440.40" stroke="#cdcdcd" stroke-width="1"/><line x1="1458.59" y1="436.85" x2="1469.65" y2="437.82" stroke="#d2d2d2" stroke-width="1"/><line x1="1483.56" y1="443.85" x2="1498.34" y2="446.46" stroke="#cdcdcd" stroke-width="1"/><line x1="1458.25" y1="439.39" x2="1469.19" y2="441.32" stroke="#d2d2d2" stroke-width="1"/><line x1="1482.53" y1="448.54" x2="1497.01" y2="452.42" stroke="#cdcdcd" stroke-width="1"/><line x1="1457.70" y1="441.88" x2="1468.42" y2="444.76" stroke="#d2d2d2" stroke-width="1"/><line x1="1481.08" y1="453.11" x2="1495.18" y2="458.24" stroke="#cdcdcd" stroke-width="1"/><line x1="1456.93" y1="444.32" x2="1467.36" y2="448.12" stroke="#d2d2d2" stroke-width="1"/><line x1="1479.25" y1="457.54" x2="1492.84" y2="463.88" stroke="#cdcdcd" stroke-width="1"/><line x1="1455.95" y1="446.68" x2="1466.01" y2="451.37" stroke="#d2d2d2" stroke-width="1"/><line x1="1477.03" y1="461.80" x2="1490.02" y2="469.30" stroke="#cdcdcd" stroke-width="1"/><line x1="1454.77" y1="448.95" x2="1464.39" y2="454.50" stroke="#d2d2d2" stroke-width="1"/><line x1="1374.61" y1="439.09" x2="1354.69" y2="440.84" stroke="#9a35a2" stroke-width="3"/><text x="1409.9" y="453.3" text-anchor="middle" font-family="Liberation Sans" font-size="11" fill="#c4c4c4">0</text><text x="1411.0" y="431.3" text-anchor="middle" font-family="Liberation Sans" font-size="11" fill="#c4c4c4">25</text><text x="1429.4" y="415.8" text-anchor="middle" font-family="Liberation Sans" font-size="11" fill="#c4c4c4">50</text><text x="1446.0" y="431.3" text-anchor="middle" font-family="Liberation Sans" font-size="11" fill="#c4c4c4">75</text><text x="1443.4" y="453.3" text-anchor="middle" font-family="Liberation Sans" font-size="11" fill="#c4c4c4">100</text><line x1="71.57" y1="999.80" x2="57.72" y2="1007.80" stroke="#cdcdcd" stroke-width="1"/><line x1="92.79" y1="987.55" x2="83.70" y2="992.80" stroke="#d2d2d2" stroke-width="1"/><line x1="69.00" y1="994.85" x2="54.50" y2="1001.61" stroke="#cdcdcd" stroke-width="1"/><line x1="91.20" y1="984.49" x2="81.68" y2="988.93" stroke="#d2d2d2" stroke-width="1"/><line x1="66.86" y1="989.69" x2="51.82" y2="995.16" stroke="#cdcdcd" stroke-width="1"/><line x1="89.88" y1="981.31" x2="80.02" y2="984.90" stroke="#d2d2d2" stroke-width="1"/><line x1="65.18" y1="984.36" x2="49.73" y2="988.51" stroke="#cdcdcd" stroke-width="1"/><line x1="88.85" y1="978.02" x2="78.70" y2="980.74" stroke="#d2d2d2" stroke-width="1"/><line x1="63.97" y1="978.91" x2="48.22" y2="981.69" stroke="#cdcdcd" stroke-width="1"/><line x1="88.10" y1="974.66" x2="77.76" y2="976.48" stroke="#d2d2d2" stroke-width="1"/><line x1="63.24" y1="973.38" x2="47.30" y2="974.77" stroke="#cdcdcd" stroke-width="1"/><line x1="87.65" y1="971.24" x2="77.19" y2="972.16" stroke="#d2d2d2" stroke-width="1"/><line x1="63.00" y1="967.80" x2="47.00" y2="967.80" stroke="#cdcdcd" stroke-width="1"/><line x1="87.50" y1="967.80" x2="77.00" y2="967.80" stroke="#d2d2d2" stroke-width="1"/><line x1="63.24" y1="962.22" x2="47.30" y2="960.83" stroke="#cdcdcd" stroke-width="1"/><line x1="87.65" y1="964.36" x2="77.19" y2="963.44" stroke="#d2d2d2" stroke-width="1"/><line x1="63.97" y1="956.69" x2="48.22" y2="953.91" stroke="#cdcdcd" stroke-width="1"/><line x1="88.10" y1="960.94" x2="77.76" y2="959.12" stroke="#d2d2d2" stroke-width="1"/><line x1="65.18" y1="951.24" x2="49.73" y2="947.09" stroke="#cdcdcd" stroke-width="1"/><line x1="88.85" y1="957.58" x2="78.70" y2="954.86" stroke="#d2d2d2" stroke-width="1"/><line x1="66.86" y1="945.91" x2="51.82" y2="940.44" stroke="#cdcdcd" stroke-width="1"/><line x1="89.88" y1="954.29" x2="80.02" y2="950.70" stroke="#d2d2d2" stroke-width="1"/><line x1="69.00" y1="940.75" x2="54.50" y2="933.99" stroke="#cdcdcd" stroke-width="1"/><line x1="91.20" y1="951.11" x2="81.68" y2="946.67" stroke="#d2d2d2" stroke-width="1"/><line x1="71.57" y1="935.80" x2="57.72" y2="927.80" stroke="#cdcdcd" stroke-width="1"/><line x1="92.79" y1="948.05" x2="83.70" y2="942.80" stroke="#d2d2d2" stroke-width="1"/><line x1="74.57" y1="931.09" x2="61.47" y2="921.91" stroke="#cdcdcd" stroke-width="1"/><line x1="94.64" y1="945.14" x2="86.04" y2="939.12" stroke="#d2d2d2" stroke-width="1"/><line x1="77.97" y1="926.66" x2="65.72" y2="916.38" stroke="#cdcdcd" stroke-width="1"/><line x1="96.74" y1="942.41" x2="88.70" y2="935.66" stroke="#d2d2d2" stroke-width="1"/><line x1="81.75" y1="922.55" x2="70.43" y2="911.23" stroke="#cdcdcd" stroke-width="1"/><line x1="99.07" y1="939.87" x2="91.64" y2="932.44" stroke="#d2d2d2" stroke-width="1"/><line x1="85.86" y1="918.77" x2="75.58" y2="906.52" stroke="#cdcdcd" stroke-width="1"/><line x1="101.61" y1="937.54" x2="94.86" y2="929.50" stroke="#d2d2d2" stroke-width="1"/><line x1="90.29" y1="915.37" x2="81.11" y2="902.27" stroke="#cdcdcd" stroke-width="1"/><line x1="104.34" y1="935.44" x2="98.32" y2="926.84" stroke="#d2d2d2" stroke-width="1"/><line x1="95.00" y1="912.37" x2="87.00" y2="898.52" stroke="#cdcdcd" stroke-width="1"/><line x1="107.25" y1="933.59" x2="102.00" y2="924.50" stroke="#d2d2d2" stroke-width="1"/><line x1="99.95" y1="909.80" x2="93.19" y2="895.30" stroke="#cdcdcd" stroke-width="1"/><line x1="110.31" y1="932.00" x2="105.87" y2="922.48" stroke="#d2d2d2" stroke-width="1"/><line x1="105.11" y1="907.66" x2="99.64" y2="892.62" stroke="#cdcdcd" stroke-width="1"/><line x1="113.49" y1="930.68" x2="109.90" y2="920.82" stroke="#d2d2d2" stroke-width="1"/><line x1="110.44" y1="905.98" x2="106.29" y2="890.53" stroke="#cdcdcd" stroke-width="1"/><line x1="116.78" y1="929.65" x2="114.06" y2="919.50" stroke="#d2d2d2" stroke-width="1"/><line x1="115.89" y1="904.77" x2="113.11" y2="889.02" stroke="#cdcdcd" stroke-width="1"/><line x1="120.14" y1="928.90" x2="118.32" y2="918.56" stroke="#d2d2d2" stroke-width="1"/><line x1="121.42" y1="904.04" x2="120.03" y2="888.10" stroke="#cdcdcd" stroke-width="1"/><line x1="123.56" y1="928.45" x2="122.64" y2="917.99" stroke="#d2d2d2" stroke-width="1"/><line x1="127.00" y1="903.80" x2="127.00" y2="887.80" stroke="#cdcdcd" stroke-width="1"/><line x1="127.00" y1="928.30" x2="127.00" y2="917.80" stroke="#d2d2d2" stroke-width="1"/><line x1="132.58" y1="904.04" x2="133.97" y2="888.10" stroke="#cdcdcd" stroke-width="1"/><line x1="130.44" y1="928.45" x2="131.36" y2="917.99" stroke="#d2d2d2" stroke-width="1"/><line x1="138.11" y1="904.77" x2="140.89" y2="889.02" stroke="#cdcdcd" stroke-width="1"/><line x1="133.86" y1="928.90" x2="135.68" y2="918.56" stroke="#d2d2d2" stroke-width="1"/><line x1="143.56" y1="905.98" x2="147.71" y2="890.53" stroke="#cdcdcd" stroke-width="1"/><line x1="137.22" y1="929.65" x2="139.94" y2="919.50" stroke="#d2d2d2" stroke-width="1"/><line x1="148.89" y1="907.66" x2="154.36" y2="892.62" stroke="#cdcdcd" stroke-width="1"/><line x1="140.51" y1="930.68" x2="144.10" y2="920.82" stroke="#d2d2d2" stroke-width="1"/><line x1="154.05" y1="909.80" x2="160.81" y2="895.30" stroke="#cdcdcd" stroke-width="1"/><line x1="143.69" y1="932.00" x2="148.13" y2="922.48" stroke="#d2d2d2" stroke-width="1"/><line x1="159.00" y1="912.37" x2="167.00" y2="898.52" stroke="#cdcdcd" stroke-width="1"/><line x1="146.75" y1="933.59" x2="152.00" y2="924.50" stroke="#d2d2d2" stroke-width="1"/><line x1="163.71" y1="915.37" x2="172.89" y2="902.27" stroke="#cdcdcd" stroke-width="1"/><line x1="149.66" y1="935.44" x2="155.68" y2="926.84" stroke="#d2d2d2" stroke-width="1"/><line x1="168.14" y1="918.77" x2="178.42" y2="906.52" stroke="#cdcdcd" stroke-width="1"/><line x1="152.39" y1="937.54" x2="159.14" y2="929.50" stroke="#d2d2d2" stroke-width="1"/><line x1="172.25" y1="922.55" x2="183.57" y2="911.23" stroke="#cdcdcd" stroke-width="1"/><line x1="154.93" y1="939.87" x2="162.36" y2="932.44" stroke="#d2d2d2" stroke-width="1"/><line x1="176.03" y1="926.66" x2="188.28" y2="916.38" stroke="#cdcdcd" stroke-width="1"/><line x1="157.26" y1="942.41" x2="165.30" y2="935.66" stroke="#d2d2d2" stroke-width="1"/><line x1="179.43" y1="931.09" x2="192.53" y2="921.91" stroke="#cdcdcd" stroke-width="1"/><line x1="159.36" y1="945.14" x2="167.96" y2="939.12" stroke="#d2d2d2" stroke-width="1"/><line x1="182.43" y1="935.80" x2="196.28" y2="927.80" stroke="#cdcdcd" stroke-width="1"/><line x1="161.21" y1="948.05" x2="170.30" y2="942.80" stroke="#d2d2d2" stroke-width="1"/><line x1="185.00" y1="940.75" x2="199.50" y2="933.99" stroke="#cdcdcd" stroke-width="1"/><line x1="162.80" y1="951.11" x2="172.32" y2="946.67" stroke="#d2d2d2" stroke-width="1"/><line x1="187.14" y1="945.91" x2="202.18" y2="940.44" stroke="#cdcdcd" stroke-width="1"/><line x1="164.12" y1="954.29" x2="173.98" y2="950.70" stroke="#d2d2d2" stroke-width="1"/><line x1="188.82" y1="951.24" x2="204.27" y2="947.09" stroke="#cdcdcd" stroke-width="1"/><line x1="165.15" y1="957.58" x2="175.30" y2="954.86" stroke="#d2d2d2" stroke-width="1"/><line x1="190.03" y1="956.69" x2="205.78" y2="953.91" stroke="#cdcdcd" stroke-width="1"/><line x1="165.90" y1="960.94" x2="176.24" y2="959.12" stroke="#d2d2d2" stroke-width="1"/><line x1="190.76" y1="962.22" x2="206.70" y2="960.83" stroke="#cdcdcd" stroke-width="1"/><line x1="166.35" y1="964.36" x2="176.81" y2="963.44" stroke="#d2d2d2" stroke-width="1"/><line x1="191.00" y1="967.80" x2="207.00" y2="967.80" stroke="#cdcdcd" stroke-width="1"/><line x1="166.50" y1="967.80" x2="177.00" y2="967.80" stroke="#d2d2d2" stroke-width="1"/><line x1="190.76" y1="973.38" x2="206.70" y2="974.77" stroke="#cdcdcd" stroke-width="1"/><line x1="166.35" y1="971.24" x2="176.81" y2="972.16" stroke="#d2d2d2" stroke-width="1"/><line x1="190.03" y1="978.91" x2="205.78" y2="981.69" stroke="#cdcdcd" stroke-width="1"/><line x1="165.90" y1="974.66" x2="176.24" y2="976.48" stroke="#d2d2d2" stroke-width="1"/><line x1="188.82" y1="984.36" x2="204.27" y2="988.51" stroke="#cdcdcd" stroke-width="1"/><line x1="165.15" y1="978.02" x2="175.30" y2="980.74" stroke="#d2d2d2" stroke-width="1"/><line x1="187.14" y1="989.69" x2="202.18" y2="995.16" stroke="#cdcdcd" stroke-width="1"/><line x1="164.12" y1="981.31" x2="173.98" y2="984.90" stroke="#d2d2d2" stroke-width="1"/><line x1="185.00" y1="994.85" x2="199.50" y2="1001.61" stroke="#cdcdcd" stroke-width="1"/><line x1="162.80" y1="984.49" x2="172.32" y2="988.93" stroke="#d2d2d2" stroke-width="1"/><line x1="182.43" y1="999.80" x2="196.28" y2="1007.80" stroke="#cdcdcd" stroke-width="1"/><line x1="161.21" y1="987.55" x2="170.30" y2="992.80" stroke="#d2d2d2" stroke-width="1"/><line x1="71.57" y1="999.80" x2="53.39" y2="1010.30" stroke="#9a35a2" stroke-width="3"/><text x="99.0" y="991.8" text-anchor="middle" font-family="Liberation Sans" font-size="11" fill="#c4c4c4">0</text><text x="99.5" y="959.8" text-anchor="middle" font-family="Liberation Sans" font-size="11" fill="#c4c4c4">25</text><text x="127.0" y="939.5" text-anchor="middle" font-family="Liberation Sans" font-size="11" fill="#c4c4c4">50</text><text x="152.5" y="959.8" text-anchor="middle" font-family="Liberation Sans" font-size="11" fill="#c4c4c4">75</text><text x="149.5" y="991.8" text-anchor="middle" font-family="Liberation Sans" font-size="11" fill="#c4c4c4">100</text><line x1="336.57" y1="1000.80" x2="322.72" y2="1008.80" stroke="#cdcdcd" stroke-width="1"/><line x1="357.79" y1="988.55" x2="348.70" y2="993.80" stroke="#d2d2d2" stroke-width="1"/><line x1="334.00" y1="995.85" x2="319.50" y2="1002.61" stroke="#cdcdcd" stroke-width="1"/><line x1="356.20" y1="985.49" x2="346.68" y2="989.93" stroke="#d2d2d2" stroke-width="1"/><line x1="331.86" y1="990.69" x2="316.82" y2="996.16" stroke="#cdcdcd" stroke-width="1"/><line x1="354.88" y1="982.31" x2="345.02" y2="985.90" stroke="#d2d2d2" stroke-width="1"/><line x1="330.18" y1="985.36" x2="314.73" y2="989.51" stroke="#cdcdcd" stroke-width="1"/><line x1="353.85" y1="979.02" x2="343.70" y2="981.74" stroke="#d2d2d2" stroke-width="1"/><line x1="328.97" y1="979.91" x2="313.22" y2="982.69" stroke="#cdcdcd" stroke-width="1"/><line x1="353.10" y1="975.66" x2="342.76" y2="977.48" stroke="#d2d2d2" stroke-width="1"/><line x1="328.24" y1="974.38" x2="312.30" y2="975.77" stroke="#cdcdcd" stroke-width="1"/><line x1="352.65" y1="972.24" x2="342.19" y2="973.16" stroke="#d2d2d2" stroke-width="1"/><line x1="328.00" y1="968.80" x2="312.00" y2="968.80" stroke="#cdcdcd" stroke-width="1"/><line x1="352.50" y1="968.80" x2="342.00" y2="968.80" stroke="#d2d2d2" stroke-width="1"/><line x1="328.24" y1="963.22" x2="312.30" y2="961.83" stroke="#cdcdcd" stroke-width="1"/><line x1="352.65" y1="965.36" x2="342.19" y2="964.44" stroke="#d2d2d2" stroke-width="1"/><line x1="328.97" y1="957.69" x2="313.22" y2="954.91" stroke="#cdcdcd" stroke-width="1"/><line x1="353.10" y1="961.94" x2="342.76" y2="960.12" stroke="#d2d2d2" stroke-width="1"/><line x1="330.18" y1="952.24" x2="314.73" y2="948.09" stroke="#cdcdcd" stroke-width="1"/><line x1="353.85" y1="958.58" x2="343.70" y2="955.86" stroke="#d2d2d2" stroke-width="1"/><line x1="331.86" y1="946.91" x2="316.82" y2="941.44" stroke="#cdcdcd" stroke-width="1"/><line x1="354.88" y1="955.29" x2="345.02" y2="951.70" stroke="#d2d2d2" stroke-width="1"/><line x1="334.00" y1="941.75" x2="319.50" y2="934.99" stroke="#cdcdcd" stroke-width="1"/><line x1="356.20" y1="952.11" x2="346.68" y2="947.67" stroke="#d2d2d2" stroke-width="1"/><line x1="336.57" y1="936.80" x2="322.72" y2="928.80" stroke="#cdcdcd" stroke-width="1"/><line x1="357.79" y1="949.05" x2="348.70" y2="943.80" stroke="#d2d2d2" stroke-width="1"/><line x1="339.57" y1="932.09" x2="326.47" y2="922.91" stroke="#cdcdcd" stroke-width="1"/><line x1="359.64" y1="946.14" x2="351.04" y2="940.12" stroke="#d2d2d2" stroke-width="1"/><line x1="342.97" y1="927.66" x2="330.72" y2="917.38" stroke="#cdcdcd" stroke-width="1"/><line x1="361.74" y1="943.41" x2="353.70" y2="936.66" stroke="#d2d2d2" stroke-width="1"/><line x1="346.75" y1="923.55" x2="335.43" y2="912.23" stroke="#cdcdcd" stroke-width="1"/><line x1="364.07" y1="940.87" x2="356.64" y2="933.44" stroke="#d2d2d2" stroke-width="1"/><line x1="350.86" y1="919.77" x2="340.58" y2="907.52" stroke="#cdcdcd" stroke-width="1"/><line x1="366.61" y1="938.54" x2="359.86" y2="930.50" stroke="#d2d2d2" stroke-width="1"/><line x1="355.29" y1="916.37" x2="346.11" y2="903.27" stroke="#cdcdcd" stroke-width="1"/><line x1="369.34" y1="936.44" x2="363.32" y2="927.84" stroke="#d2d2d2" stroke-width="1"/><line x1="360.00" y1="913.37" x2="352.00" y2="899.52" stroke="#cdcdcd" stroke-width="1"/><line x1="372.25" y1="934.59" x2="367.00" y2="925.50" stroke="#d2d2d2" stroke-width="1"/><line x1="364.95" y1="910.80" x2="358.19" y2="896.30" stroke="#cdcdcd" stroke-width="1"/><line x1="375.31" y1="933.00" x2="370.87" y2="923.48" stroke="#d2d2d2" stroke-width="1"/><line x1="370.11" y1="908.66" x2="364.64" y2="893.62" stroke="#cdcdcd" stroke-width="1"/><line x1="378.49" y1="931.68" x2="374.90" y2="921.82" stroke="#d2d2d2" stroke-width="1"/><line x1="375.44" y1="906.98" x2="371.29" y2="891.53" stroke="#cdcdcd" stroke-width="1"/><line x1="381.78" y1="930.65" x2="379.06" y2="920.50" stroke="#d2d2d2" stroke-width="1"/><line x1="380.89" y1="905.77" x2="378.11" y2="890.02" stroke="#cdcdcd" stroke-width="1"/><line x1="385.14" y1="929.90" x2="383.32" y2="919.56" stroke="#d2d2d2" stroke-width="1"/><line x1="386.42" y1="905.04" x2="385.03" y2="889.10" stroke="#cdcdcd" stroke-width="1"/><line x1="388.56" y1="929.45" x2="387.64" y2="918.99" stroke="#d2d2d2" stroke-width="1"/><line x1="392.00" y1="904.80" x2="392.00" y2="888.80" stroke="#cdcdcd" stroke-width="1"/><line x1="392.00" y1="929.30" x2="392.00" y2="918.80" stroke="#d2d2d2" stroke-width="1"/><line x1="397.58" y1="905.04" x2="398.97" y2="889.10" stroke="#cdcdcd" stroke-width="1"/><line x1="395.44" y1="929.45" x2="396.36" y2="918.99" stroke="#d2d2d2" stroke-width="1"/><line x1="403.11" y1="905.77" x2="405.89" y2="890.02" stroke="#cdcdcd" stroke-width="1"/><line x1="398.86" y1="929.90" x2="400.68" y2="919.56" stroke="#d2d2d2" stroke-width="1"/><line x1="408.56" y1="906.98" x2="412.71" y2="891.53" stroke="#cdcdcd" stroke-width="1"/><line x1="402.22" y1="930.65" x2="404.94" y2="920.50" stroke="#d2d2d2" stroke-width="1"/><line x1="413.89" y1="908.66" x2="419.36" y2="893.62" stroke="#cdcdcd" stroke-width="1"/><line x1="405.51" y1="931.68" x2="409.10" y2="921.82" stroke="#d2d2d2" stroke-width="1"/><line x1="419.05" y1="910.80" x2="425.81" y2="896.30" stroke="#cdcdcd" stroke-width="1"/><line x1="408.69" y1="933.00" x2="413.13" y2="923.48" stroke="#d2d2d2" stroke-width="1"/><line x1="424.00" y1="913.37" x2="432.00" y2="899.52" stroke="#cdcdcd" stroke-width="1"/><line x1="411.75" y1="934.59" x2="417.00" y2="925.50" stroke="#d2d2d2" stroke-width="1"/><line x1="428.71" y1="916.37" x2="437.89" y2="903.27" stroke="#cdcdcd" stroke-width="1"/><line x1="414.66" y1="936.44" x2="420.68" y2="927.84" stroke="#d2d2d2" stroke-width="1"/><line x1="433.14" y1="919.77" x2="443.42" y2="907.52" stroke="#cdcdcd" stroke-width="1"/><line x1="417.39" y1="938.54" x2="424.14" y2="930.50" stroke="#d2d2d2" stroke-width="1"/><line x1="437.25" y1="923.55" x2="448.57" y2="912.23" stroke="#cdcdcd" stroke-width="1"/><line x1="419.93" y1="940.87" x2="427.36" y2="933.44" stroke="#d2d2d2" stroke-width="1"/><line x1="441.03" y1="927.66" x2="453.28" y2="917.38" stroke="#cdcdcd" stroke-width="1"/><line x1="422.26" y1="943.41" x2="430.30" y2="936.66" stroke="#d2d2d2" stroke-width="1"/><line x1="444.43" y1="932.09" x2="457.53" y2="922.91" stroke="#cdcdcd" stroke-width="1"/><line x1="424.36" y1="946.14" x2="432.96" y2="940.12" stroke="#d2d2d2" stroke-width="1"/><line x1="447.43" y1="936.80" x2="461.28" y2="928.80" stroke="#cdcdcd" stroke-width="1"/><line x1="426.21" y1="949.05" x2="435.30" y2="943.80" stroke="#d2d2d2" stroke-width="1"/><line x1="450.00" y1="941.75" x2="464.50" y2="934.99" stroke="#cdcdcd" stroke-width="1"/><line x1="427.80" y1="952.11" x2="437.32" y2="947.67" stroke="#d2d2d2" stroke-width="1"/><line x1="452.14" y1="946.91" x2="467.18" y2="941.44" stroke="#cdcdcd" stroke-width="1"/><line x1="429.12" y1="955.29" x2="438.98" y2="951.70" stroke="#d2d2d2" stroke-width="1"/><line x1="453.82" y1="952.24" x2="469.27" y2="948.09" stroke="#cdcdcd" stroke-width="1"/><line x1="430.15" y1="958.58" x2="440.30" y2="955.86" stroke="#d2d2d2" stroke-width="1"/><line x1="455.03" y1="957.69" x2="470.78" y2="954.91" stroke="#cdcdcd" stroke-width="1"/><line x1="430.90" y1="961.94" x2="441.24" y2="960.12" stroke="#d2d2d2" stroke-width="1"/><line x1="455.76" y1="963.22" x2="471.70" y2="961.83" stroke="#cdcdcd" stroke-width="1"/><line x1="431.35" y1="965.36" x2="441.81" y2="964.44" stroke="#d2d2d2" stroke-width="1"/><line x1="456.00" y1="968.80" x2="472.00" y2="968.80" stroke="#cdcdcd" stroke-width="1"/><line x1="431.50" y1="968.80" x2="442.00" y2="968.80" stroke="#d2d2d2" stroke-width="1"/><line x1="455.76" y1="974.38" x2="471.70" y2="975.77" stroke="#cdcdcd" stroke-width="1"/><line x1="431.35" y1="972.24" x2="441.81" y2="973.16" stroke="#d2d2d2" stroke-width="1"/><line x1="455.03" y1="979.91" x2="470.78" y2="982.69" stroke="#cdcdcd" stroke-width="1"/><line x1="430.90" y1="975.66" x2="441.24" y2="977.48" stroke="#d2d2d2" stroke-width="1"/><line x1="453.82" y1="985.36" x2="469.27" y2="989.51" stroke="#cdcdcd" stroke-width="1"/><line x1="430.15" y1="979.02" x2="440.30" y2="981.74" stroke="#d2d2d2" stroke-width="1"/><line x1="452.14" y1="990.69" x2="467.18" y2="996.16" stroke="#cdcdcd" stroke-width="1"/><line x1="429.12" y1="982.31" x2="438.98" y2="985.90" stroke="#d2d2d2" stroke-width="1"/><line x1="450.00" y1="995.85" x2="464.50" y2="1002.61" stroke="#cdcdcd" stroke-width="1"/><line x1="427.80" y1="985.49" x2="437.32" y2="989.93" stroke="#d2d2d2" stroke-width="1"/><line x1="447.43" y1="1000.80" x2="461.28" y2="1008.80" stroke="#cdcdcd" stroke-width="1"/><line x1="426.21" y1="988.55" x2="435.30" y2="993.80" stroke="#d2d2d2" stroke-width="1"/><line x1="336.57" y1="1000.80" x2="318.39" y2="1011.30" stroke="#9a35a2" stroke-width="3"/><text x="364.0" y="992.8" text-anchor="middle" font-family="Liberation Sans" font-size="11" fill="#c4c4c4">0</text><text x="364.5" y="960.8" text-anchor="middle" font-family="Liberation Sans" font-size="11" fill="#c4c4c4">25</text><text x="392.0" y="940.5" text-anchor="middle" font-family="Liberation Sans" font-size="11" fill="#c4c4c4">50</text><text x="417.5" y="960.8" text-anchor="middle" font-family="Liberation Sans" font-size="11" fill="#c4c4c4">75</text><text x="414.5" y="992.8" text-anchor="middle" font-family="Liberation Sans" font-size="11" fill="#c4c4c4">100</text><line x1="604.57" y1="999.80" x2="590.72" y2="1007.80" stroke="#cdcdcd" stroke-width="1"/><line x1="625.79" y1="987.55" x2="616.70" y2="992.80" stroke="#d2d2d2" stroke-width="1"/><line x1="602.00" y1="994.85" x2="587.50" y2="1001.61" stroke="#cdcdcd" stroke-width="1"/><line x1="624.20" y1="984.49" x2="614.68" y2="988.93" stroke="#d2d2d2" stroke-width="1"/><line x1="599.86" y1="989.69" x2="584.82" y2="995.16" stroke="#cdcdcd" stroke-width="1"/><line x1="622.88" y1="981.31" x2="613.02" y2="984.90" stroke="#d2d2d2" stroke-width="1"/><line x1="598.18" y1="984.36" x2="582.73" y2="988.51" stroke="#cdcdcd" stroke-width="1"/><line x1="621.85" y1="978.02" x2="611.70" y2="980.74" stroke="#d2d2d2" stroke-width="1"/><line x1="596.97" y1="978.91" x2="581.22" y2="981.69" stroke="#cdcdcd" stroke-width="1"/><line x1="621.10" y1="974.66" x2="610.76" y2="976.48" stroke="#d2d2d2" stroke-width="1"/><line x1="596.24" y1="973.38" x2="580.30" y2="974.77" stroke="#cdcdcd" stroke-width="1"/><line x1="620.65" y1="971.24" x2="610.19" y2="972.16" stroke="#d2d2d2" stroke-width="1"/><line x1="596.00" y1="967.80" x2="580.00" y2="967.80" stroke="#cdcdcd" stroke-width="1"/><line x1="620.50" y1="967.80" x2="610.00" y2="967.80" stroke="#d2d2d2" stroke-width="1"/><line x1="596.24" y1="962.22" x2="580.30" y2="960.83" stroke="#cdcdcd" stroke-width="1"/><line x1="620.65" y1="964.36" x2="610.19" y2="963.44" stroke="#d2d2d2" stroke-width="1"/><line x1="596.97" y1="956.69" x2="581.22" y2="953.91" stroke="#cdcdcd" stroke-width="1"/><line x1="621.10" y1="960.94" x2="610.76" y2="959.12" stroke="#d2d2d2" stroke-width="1"/><line x1="598.18" y1="951.24" x2="582.73" y2="947.09" stroke="#cdcdcd" stroke-width="1"/><line x1="621.85" y1="957.58" x2="611.70" y2="954.86" stroke="#d2d2d2" stroke-width="1"/><line x1="599.86" y1="945.91" x2="584.82" y2="940.44" stroke="#cdcdcd" stroke-width="1"/><line x1="622.88" y1="954.29" x2="613.02" y2="950.70" stroke="#d2d2d2" stroke-width="1"/><line x1="602.00" y1="940.75" x2="587.50" y2="933.99" stroke="#cdcdcd" stroke-width="1"/><line x1="624.20" y1="951.11" x2="614.68" y2="946.67" stroke="#d2d2d2" stroke-width="1"/><line x1="604.57" y1="935.80" x2="590.72" y2="927.80" stroke="#cdcdcd" stroke-width="1"/><line x1="625.79" y1="948.05" x2="616.70" y2="942.80" stroke="#d2d2d2" stroke-width="1"/><line x1="607.57" y1="931.09" x2="594.47" y2="921.91" stroke="#cdcdcd" stroke-width="1"/><line x1="627.64" y1="945.14" x2="619.04" y2="939.12" stroke="#d2d2d2" stroke-width="1"/><line x1="610.97" y1="926.66" x2="598.72" y2="916.38" stroke="#cdcdcd" stroke-width="1"/><line x1="629.74" y1="942.41" x2="621.70" y2="935.66" stroke="#d2d2d2" stroke-width="1"/><line x1="614.75" y1="922.55" x2="603.43" y2="911.23" stroke="#cdcdcd" stroke-width="1"/><line x1="632.07" y1="939.87" x2="624.64" y2="932.44" stroke="#d2d2d2" stroke-width="1"/><line x1="618.86" y1="918.77" x2="608.58" y2="906.52" stroke="#cdcdcd" stroke-width="1"/><line x1="634.61" y1="937.54" x2="627.86" y2="929.50" stroke="#d2d2d2" stroke-width="1"/><line x1="623.29" y1="915.37" x2="614.11" y2="902.27" stroke="#cdcdcd" stroke-width="1"/><line x1="637.34" y1="935.44" x2="631.32" y2="926.84" stroke="#d2d2d2" stroke-width="1"/><line x1="628.00" y1="912.37" x2="620.00" y2="898.52" stroke="#cdcdcd" stroke-width="1"/><line x1="640.25" y1="933.59" x2="635.00" y2="924.50" stroke="#d2d2d2" stroke-width="1"/><line x1="632.95" y1="909.80" x2="626.19" y2="895.30" stroke="#cdcdcd" stroke-width="1"/><line x1="643.31" y1="932.00" x2="638.87" y2="922.48" stroke="#d2d2d2" stroke-width="1"/><line x1="638.11" y1="907.66" x2="632.64" y2="892.62" stroke="#cdcdcd" stroke-width="1"/><line x1="646.49" y1="930.68" x2="642.90" y2="920.82" stroke="#d2d2d2" stroke-width="1"/><line x1="643.44" y1="905.98" x2="639.29" y2="890.53" stroke="#cdcdcd" stroke-width="1"/><line x1="649.78" y1="929.65" x2="647.06" y2="919.50" stroke="#d2d2d2" stroke-width="1"/><line x1="648.89" y1="904.77" x2="646.11" y2="889.02" stroke="#cdcdcd" stroke-width="1"/><line x1="653.14" y1="928.90" x2="651.32" y2="918.56" stroke="#d2d2d2" stroke-width="1"/><line x1="654.42" y1="904.04" x2="653.03" y2="888.10" stroke="#cdcdcd" stroke-width="1"/><line x1="656.56" y1="928.45" x2="655.64" y2="917.99" stroke="#d2d2d2" stroke-width="1"/><line x1="660.00" y1="903.80" x2="660.00" y2="887.80" stroke="#cdcdcd" stroke-width="1"/><line x1="660.00" y1="928.30" x2="660.00" y2="917.80" stroke="#d2d2d2" stroke-width="1"/><line x1="665.58" y1="904.04" x2="666.97" y2="888.10" stroke="#cdcdcd" stroke-width="1"/><line x1="663.44" y1="928.45" x2="664.36" y2="917.99" stroke="#d2d2d2" stroke-width="1"/><line x1="671.11" y1="904.77" x2="673.89" y2="889.02" stroke="#cdcdcd" stroke-width="1"/><line x1="666.86" y1="928.90" x2="668.68" y2="918.56" stroke="#d2d2d2" stroke-width="1"/><line x1="676.56" y1="905.98" x2="680.71" y2="890.53" stroke="#cdcdcd" stroke-width="1"/><line x1="670.22" y1="929.65" x2="672.94" y2="919.50" stroke="#d2d2d2" stroke-width="1"/><line x1="681.89" y1="907.66" x2="687.36" y2="892.62" stroke="#cdcdcd" stroke-width="1"/><line x1="673.51" y1="930.68" x2="677.10" y2="920.82" stroke="#d2d2d2" stroke-width="1"/><line x1="687.05" y1="909.80" x2="693.81" y2="895.30" stroke="#cdcdcd" stroke-width="1"/><line x1="676.69" y1="932.00" x2="681.13" y2="922.48" stroke="#d2d2d2" stroke-width="1"/><line x1="692.00" y1="912.37" x2="700.00" y2="898.52" stroke="#cdcdcd" stroke-width="1"/><line x1="679.75" y1="933.59" x2="685.00" y2="924.50" stroke="#d2d2d2" stroke-width="1"/><line x1="696.71" y1="915.37" x2="705.89" y2="902.27" stroke="#cdcdcd" stroke-width="1"/><line x1="682.66" y1="935.44" x2="688.68" y2="926.84" stroke="#d2d2d2" stroke-width="1"/><line x1="701.14" y1="918.77" x2="711.42" y2="906.52" stroke="#cdcdcd" stroke-width="1"/><line x1="685.39" y1="937.54" x2="692.14" y2="929.50" stroke="#d2d2d2" stroke-width="1"/><line x1="705.25" y1="922.55" x2="716.57" y2="911.23" stroke="#cdcdcd" stroke-width="1"/><line x1="687.93" y1="939.87" x2="695.36" y2="932.44" stroke="#d2d2d2" stroke-width="1"/><line x1="709.03" y1="926.66" x2="721.28" y2="916.38" stroke="#cdcdcd" stroke-width="1"/><line x1="690.26" y1="942.41" x2="698.30" y2="935.66" stroke="#d2d2d2" stroke-width="1"/><line x1="712.43" y1="931.09" x2="725.53" y2="921.91" stroke="#cdcdcd" stroke-width="1"/><line x1="692.36" y1="945.14" x2="700.96" y2="939.12" stroke="#d2d2d2" stroke-width="1"/><line x1="715.43" y1="935.80" x2="729.28" y2="927.80" stroke="#cdcdcd" stroke-width="1"/><line x1="694.21" y1="948.05" x2="703.30" y2="942.80" stroke="#d2d2d2" stroke-width="1"/><line x1="718.00" y1="940.75" x2="732.50" y2="933.99" stroke="#cdcdcd" stroke-width="1"/><line x1="695.80" y1="951.11" x2="705.32" y2="946.67" stroke="#d2d2d2" stroke-width="1"/><line x1="720.14" y1="945.91" x2="735.18" y2="940.44" stroke="#cdcdcd" stroke-width="1"/><line x1="697.12" y1="954.29" x2="706.98" y2="950.70" stroke="#d2d2d2" stroke-width="1"/><line x1="721.82" y1="951.24" x2="737.27" y2="947.09" stroke="#cdcdcd" stroke-width="1"/><line x1="698.15" y1="957.58" x2="708.30" y2="954.86" stroke="#d2d2d2" stroke-width="1"/><line x1="723.03" y1="956.69" x2="738.78" y2="953.91" stroke="#cdcdcd" stroke-width="1"/><line x1="698.90" y1="960.94" x2="709.24" y2="959.12" stroke="#d2d2d2" stroke-width="1"/><line x1="723.76" y1="962.22" x2="739.70" y2="960.83" stroke="#cdcdcd" stroke-width="1"/><line x1="699.35" y1="964.36" x2="709.81" y2="963.44" stroke="#d2d2d2" stroke-width="1"/><line x1="724.00" y1="967.80" x2="740.00" y2="967.80" stroke="#cdcdcd" stroke-width="1"/><line x1="699.50" y1="967.80" x2="710.00" y2="967.80" stroke="#d2d2d2" stroke-width="1"/><line x1="723.76" y1="973.38" x2="739.70" y2="974.77" stroke="#cdcdcd" stroke-width="1"/><line x1="699.35" y1="971.24" x2="709.81" y2="972.16" stroke="#d2d2d2" stroke-width="1"/><line x1="723.03" y1="978.91" x2="738.78" y2="981.69" stroke="#cdcdcd" stroke-width="1"/><line x1="698.90" y1="974.66" x2="709.24" y2="976.48" stroke="#d2d2d2" stroke-width="1"/><line x1="721.82" y1="984.36" x2="737.27" y2="988.51" stroke="#cdcdcd" stroke-width="1"/><line x1="698.15" y1="978.02" x2="708.30" y2="980.74" stroke="#d2d2d2" stroke-width="1"/><line x1="720.14" y1="989.69" x2="735.18" y2="995.16" stroke="#cdcdcd" stroke-width="1"/><line x1="697.12" y1="981.31" x2="706.98" y2="984.90" stroke="#d2d2d2" stroke-width="1"/><line x1="718.00" y1="994.85" x2="732.50" y2="1001.61" stroke="#cdcdcd" stroke-width="1"/><line x1="695.80" y1="984.49" x2="705.32" y2="988.93" stroke="#d2d2d2" stroke-width="1"/><line x1="715.43" y1="999.80" x2="729.28" y2="1007.80" stroke="#cdcdcd" stroke-width="1"/><line x1="694.21" y1="987.55" x2="703.30" y2="992.80" stroke="#d2d2d2" stroke-width="1"/><line x1="604.57" y1="999.80" x2="586.39" y2="1010.30" stroke="#9a35a2" stroke-width="3"/><text x="632.0" y="991.8" text-anchor="middle" font-family="Liberation Sans" font-size="11" fill="#c4c4c4">0</text><text x="632.5" y="959.8" text-anchor="middle" font-family="Liberation Sans" font-size="11" fill="#c4c4c4">25</text><text x="660.0" y="939.5" text-anchor="middle" font-family="Liberation Sans" font-size="11" fill="#c4c4c4">50</text><text x="685.5" y="959.8" text-anchor="middle" font-family="Liberation Sans" font-size="11" fill="#c4c4c4">75</text><text x="682.5" y="991.8" text-anchor="middle" font-family="Liberation Sans" font-size="11" fill="#c4c4c4">100</text><line x1="880.57" y1="1000.80" x2="866.72" y2="1008.80" stroke="#cdcdcd" stroke-width="1"/><line x1="901.79" y1="988.55" x2="892.70" y2="993.80" stroke="#d2d2d2" stroke-width="1"/><line x1="878.00" y1="995.85" x2="863.50" y2="1002.61" stroke="#cdcdcd" stroke-width="1"/><line x1="900.20" y1="985.49" x2="890.68" y2="989.93" stroke="#d2d2d2" stroke-width="1"/><line x1="875.86" y1="990.69" x2="860.82" y2="996.16" stroke="#cdcdcd" stroke-width="1"/><line x1="898.88" y1="982.31" x2="889.02" y2="985.90" stroke="#d2d2d2" stroke-width="1"/><line x1="874.18" y1="985.36" x2="858.73" y2="989.51" stroke="#cdcdcd" stroke-width="1"/><line x1="897.85" y1="979.02" x2="887.70" y2="981.74" stroke="#d2d2d2" stroke-width="1"/><line x1="872.97" y1="979.91" x2="857.22" y2="982.69" stroke="#cdcdcd" stroke-width="1"/><line x1="897.10" y1="975.66" x2="886.76" y2="977.48" stroke="#d2d2d2" stroke-width="1"/><line x1="872.24" y1="974.38" x2="856.30" y2="975.77" stroke="#cdcdcd" stroke-width="1"/><line x1="896.65" y1="972.24" x2="886.19" y2="973.16" stroke="#d2d2d2" stroke-width="1"/><line x1="872.00" y1="968.80" x2="856.00" y2="968.80" stroke="#cdcdcd" stroke-width="1"/><line x1="896.50" y1="968.80" x2="886.00" y2="968.80" stroke="#d2d2d2" stroke-width="1"/><line x1="872.24" y1="963.22" x2="856.30" y2="961.83" stroke="#cdcdcd" stroke-width="1"/><line x1="896.65" y1="965.36" x2="886.19" y2="964.44" stroke="#d2d2d2" stroke-width="1"/><line x1="872.97" y1="957.69" x2="857.22" y2="954.91" stroke="#cdcdcd" stroke-width="1"/><line x1="897.10" y1="961.94" x2="886.76" y2="960.12" stroke="#d2d2d2" stroke-width="1"/><line x1="874.18" y1="952.24" x2="858.73" y2="948.09" stroke="#cdcdcd" stroke-width="1"/><line x1="897.85" y1="958.58" x2="887.70" y2="955.86" stroke="#d2d2d2" stroke-width="1"/><line x1="875.86" y1="946.91" x2="860.82" y2="941.44" stroke="#cdcdcd" stroke-width="1"/><line x1="898.88" y1="955.29" x2="889.02" y2="951.70" stroke="#d2d2d2" stroke-width="1"/><line x1="878.00" y1="941.75" x2="863.50" y2="934.99" stroke="#cdcdcd" stroke-width="1"/><line x1="900.20" y1="952.11" x2="890.68" y2="947.67" stroke="#d2d2d2" stroke-width="1"/><line x1="880.57" y1="936.80" x2="866.72" y2="928.80" stroke="#cdcdcd" stroke-width="1"/><line x1="901.79" y1="949.05" x2="892.70" y2="943.80" stroke="#d2d2d2" stroke-width="1"/><line x1="883.57" y1="932.09" x2="870.47" y2="922.91" stroke="#cdcdcd" stroke-width="1"/><line x1="903.64" y1="946.14" x2="895.04" y2="940.12" stroke="#d2d2d2" stroke-width="1"/><line x1="886.97" y1="927.66" x2="874.72" y2="917.38" stroke="#cdcdcd" stroke-width="1"/><line x1="905.74" y1="943.41" x2="897.70" y2="936.66" stroke="#d2d2d2" stroke-width="1"/><line x1="890.75" y1="923.55" x2="879.43" y2="912.23" stroke="#cdcdcd" stroke-width="1"/><line x1="908.07" y1="940.87" x2="900.64" y2="933.44" stroke="#d2d2d2" stroke-width="1"/><line x1="894.86" y1="919.77" x2="884.58" y2="907.52" stroke="#cdcdcd" stroke-width="1"/><line x1="910.61" y1="938.54" x2="903.86" y2="930.50" stroke="#d2d2d2" stroke-width="1"/><line x1="899.29" y1="916.37" x2="890.11" y2="903.27" stroke="#cdcdcd" stroke-width="1"/><line x1="913.34" y1="936.44" x2="907.32" y2="927.84" stroke="#d2d2d2" stroke-width="1"/><line x1="904.00" y1="913.37" x2="896.00" y2="899.52" stroke="#cdcdcd" stroke-width="1"/><line x1="916.25" y1="934.59" x2="911.00" y2="925.50" stroke="#d2d2d2" stroke-width="1"/><line x1="908.95" y1="910.80" x2="902.19" y2="896.30" stroke="#cdcdcd" stroke-width="1"/><line x1="919.31" y1="933.00" x2="914.87" y2="923.48" stroke="#d2d2d2" stroke-width="1"/><line x1="914.11" y1="908.66" x2="908.64" y2="893.62" stroke="#cdcdcd" stroke-width="1"/><line x1="922.49" y1="931.68" x2="918.90" y2="921.82" stroke="#d2d2d2" stroke-width="1"/><line x1="919.44" y1="906.98" x2="915.29" y2="891.53" stroke="#cdcdcd" stroke-width="1"/><line x1="925.78" y1="930.65" x2="923.06" y2="920.50" stroke="#d2d2d2" stroke-width="1"/><line x1="924.89" y1="905.77" x2="922.11" y2="890.02" stroke="#cdcdcd" stroke-width="1"/><line x1="929.14" y1="929.90" x2="927.32" y2="919.56" stroke="#d2d2d2" stroke-width="1"/><line x1="930.42" y1="905.04" x2="929.03" y2="889.10" stroke="#cdcdcd" stroke-width="1"/><line x1="932.56" y1="929.45" x2="931.64" y2="918.99" stroke="#d2d2d2" stroke-width="1"/><line x1="936.00" y1="904.80" x2="936.00" y2="888.80" stroke="#cdcdcd" stroke-width="1"/><line x1="936.00" y1="929.30" x2="936.00" y2="918.80" stroke="#d2d2d2" stroke-width="1"/><line x1="941.58" y1="905.04" x2="942.97" y2="889.10" stroke="#cdcdcd" stroke-width="1"/><line x1="939.44" y1="929.45" x2="940.36" y2="918.99" stroke="#d2d2d2" stroke-width="1"/><line x1="947.11" y1="905.77" x2="949.89" y2="890.02" stroke="#cdcdcd" stroke-width="1"/><line x1="942.86" y1="929.90" x2="944.68" y2="919.56" stroke="#d2d2d2" stroke-width="1"/><line x1="952.56" y1="906.98" x2="956.71" y2="891.53" stroke="#cdcdcd" stroke-width="1"/><line x1="946.22" y1="930.65" x2="948.94" y2="920.50" stroke="#d2d2d2" stroke-width="1"/><line x1="957.89" y1="908.66" x2="963.36" y2="893.62" stroke="#cdcdcd" stroke-width="1"/><line x1="949.51" y1="931.68" x2="953.10" y2="921.82" stroke="#d2d2d2" stroke-width="1"/><line x1="963.05" y1="910.80" x2="969.81" y2="896.30" stroke="#cdcdcd" stroke-width="1"/><line x1="952.69" y1="933.00" x2="957.13" y2="923.48" stroke="#d2d2d2" stroke-width="1"/><line x1="968.00" y1="913.37" x2="976.00" y2="899.52" stroke="#cdcdcd" stroke-width="1"/><line x1="955.75" y1="934.59" x2="961.00" y2="925.50" stroke="#d2d2d2" stroke-width="1"/><line x1="972.71" y1="916.37" x2="981.89" y2="903.27" stroke="#cdcdcd" stroke-width="1"/><line x1="958.66" y1="936.44" x2="964.68" y2="927.84" stroke="#d2d2d2" stroke-width="1"/><line x1="977.14" y1="919.77" x2="987.42" y2="907.52" stroke="#cdcdcd" stroke-width="1"/><line x1="961.39" y1="938.54" x2="968.14" y2="930.50" stroke="#d2d2d2" stroke-width="1"/><line x1="981.25" y1="923.55" x2="992.57" y2="912.23" stroke="#cdcdcd" stroke-width="1"/><line x1="963.93" y1="940.87" x2="971.36" y2="933.44" stroke="#d2d2d2" stroke-width="1"/><line x1="985.03" y1="927.66" x2="997.28" y2="917.38" stroke="#cdcdcd" stroke-width="1"/><line x1="966.26" y1="943.41" x2="974.30" y2="936.66" stroke="#d2d2d2" stroke-width="1"/><line x1="988.43" y1="932.09" x2="1001.53" y2="922.91" stroke="#cdcdcd" stroke-width="1"/><line x1="968.36" y1="946.14" x2="976.96" y2="940.12" stroke="#d2d2d2" stroke-width="1"/><line x1="991.43" y1="936.80" x2="1005.28" y2="928.80" stroke="#cdcdcd" stroke-width="1"/><line x1="970.21" y1="949.05" x2="979.30" y2="943.80" stroke="#d2d2d2" stroke-width="1"/><line x1="994.00" y1="941.75" x2="1008.50" y2="934.99" stroke="#cdcdcd" stroke-width="1"/><line x1="971.80" y1="952.11" x2="981.32" y2="947.67" stroke="#d2d2d2" stroke-width="1"/><line x1="996.14" y1="946.91" x2="1011.18" y2="941.44" stroke="#cdcdcd" stroke-width="1"/><line x1="973.12" y1="955.29" x2="982.98" y2="951.70" stroke="#d2d2d2" stroke-width="1"/><line x1="997.82" y1="952.24" x2="1013.27" y2="948.09" stroke="#cdcdcd" stroke-width="1"/><line x1="974.15" y1="958.58" x2="984.30" y2="955.86" stroke="#d2d2d2" stroke-width="1"/><line x1="999.03" y1="957.69" x2="1014.78" y2="954.91" stroke="#cdcdcd" stroke-width="1"/><line x1="974.90" y1="961.94" x2="985.24" y2="960.12" stroke="#d2d2d2" stroke-width="1"/><line x1="999.76" y1="963.22" x2="1015.70" y2="961.83" stroke="#cdcdcd" stroke-width="1"/><line x1="975.35" y1="965.36" x2="985.81" y2="964.44" stroke="#d2d2d2" stroke-width="1"/><line x1="1000.00" y1="968.80" x2="1016.00" y2="968.80" stroke="#cdcdcd" stroke-width="1"/><line x1="975.50" y1="968.80" x2="986.00" y2="968.80" stroke="#d2d2d2" stroke-width="1"/><line x1="999.76" y1="974.38" x2="1015.70" y2="975.77" stroke="#cdcdcd" stroke-width="1"/><line x1="975.35" y1="972.24" x2="985.81" y2="973.16" stroke="#d2d2d2" stroke-width="1"/><line x1="999.03" y1="979.91" x2="1014.78" y2="982.69" stroke="#cdcdcd" stroke-width="1"/><line x1="974.90" y1="975.66" x2="985.24" y2="977.48" stroke="#d2d2d2" stroke-width="1"/><line x1="997.82" y1="985.36" x2="1013.27" y2="989.51" stroke="#cdcdcd" stroke-width="1"/><line x1="974.15" y1="979.02" x2="984.30" y2="981.74" stroke="#d2d2d2" stroke-width="1"/><line x1="996.14" y1="990.69" x2="1011.18" y2="996.16" stroke="#cdcdcd" stroke-width="1"/><line x1="973.12" y1="982.31" x2="982.98" y2="985.90" stroke="#d2d2d2" stroke-width="1"/><line x1="994.00" y1="995.85" x2="1008.50" y2="1002.61" stroke="#cdcdcd" stroke-width="1"/><line x1="971.80" y1="985.49" x2="981.32" y2="989.93" stroke="#d2d2d2" stroke-width="1"/><line x1="991.43" y1="1000.80" x2="1005.28" y2="1008.80" stroke="#cdcdcd" stroke-width="1"/><line x1="970.21" y1="988.55" x2="979.30" y2="993.80" stroke="#d2d2d2" stroke-width="1"/><line x1="880.57" y1="1000.80" x2="862.39" y2="1011.30" stroke="#9a35a2" stroke-width="3"/><text x="908.0" y="992.8" text-anchor="middle" font-family="Liberation Sans" font-size="11" fill="#c4c4c4">0</text><text x="908.5" y="960.8" text-anchor="middle" font-family="Liberation Sans" font-size="11" fill="#c4c4c4">25</text><text x="936.0" y="940.5" text-anchor="middle" font-family="Liberation Sans" font-size="11" fill="#c4c4c4">50</text><text x="961.5" y="960.8" text-anchor="middle" font-family="Liberation Sans" font-size="11" fill="#c4c4c4">75</text><text x="958.5" y="992.8" text-anchor="middle" font-family="Liberation Sans" font-size="11" fill="#c4c4c4">100</text><line x1="1170.57" y1="1000.80" x2="1156.72" y2="1008.80" stroke="#cdcdcd" stroke-width="1"/><line x1="1191.79" y1="988.55" x2="1182.70" y2="993.80" stroke="#d2d2d2" stroke-width="1"/><line x1="1168.00" y1="995.85" x2="1153.50" y2="1002.61" stroke="#cdcdcd" stroke-width="1"/><line x1="1190.20" y1="985.49" x2="1180.68" y2="989.93" stroke="#d2d2d2" stroke-width="1"/><line x1="1165.86" y1="990.69" x2="1150.82" y2="996.16" stroke="#cdcdcd" stroke-width="1"/><line x1="1188.88" y1="982.31" x2="1179.02" y2="985.90" stroke="#d2d2d2" stroke-width="1"/><line x1="1164.18" y1="985.36" x2="1148.73" y2="989.51" stroke="#cdcdcd" stroke-width="1"/><line x1="1187.85" y1="979.02" x2="1177.70" y2="981.74" stroke="#d2d2d2" stroke-width="1"/><line x1="1162.97" y1="979.91" x2="1147.22" y2="982.69" stroke="#cdcdcd" stroke-width="1"/><line x1="1187.10" y1="975.66" x2="1176.76" y2="977.48" stroke="#d2d2d2" stroke-width="1"/><line x1="1162.24" y1="974.38" x2="1146.30" y2="975.77" stroke="#cdcdcd" stroke-width="1"/><line x1="1186.65" y1="972.24" x2="1176.19" y2="973.16" stroke="#d2d2d2" stroke-width="1"/><line x1="1162.00" y1="968.80" x2="1146.00" y2="968.80" stroke="#cdcdcd" stroke-width="1"/><line x1="1186.50" y1="968.80" x2="1176.00" y2="968.80" stroke="#d2d2d2" stroke-width="1"/><line x1="1162.24" y1="963.22" x2="1146.30" y2="961.83" stroke="#cdcdcd" stroke-width="1"/><line x1="1186.65" y1="965.36" x2="1176.19" y2="964.44" stroke="#d2d2d2" stroke-width="1"/><line x1="1162.97" y1="957.69" x2="1147.22" y2="954.91" stroke="#cdcdcd" stroke-width="1"/><line x1="1187.10" y1="961.94" x2="1176.76" y2="960.12" stroke="#d2d2d2" stroke-width="1"/><line x1="1164.18" y1="952.24" x2="1148.73" y2="948.09" stroke="#cdcdcd" stroke-width="1"/><line x1="1187.85" y1="958.58" x2="1177.70" y2="955.86" stroke="#d2d2d2" stroke-width="1"/><line x1="1165.86" y1="946.91" x2="1150.82" y2="941.44" stroke="#cdcdcd" stroke-width="1"/><line x1="1188.88" y1="955.29" x2="1179.02" y2="951.70" stroke="#d2d2d2" stroke-width="1"/><line x1="1168.00" y1="941.75" x2="1153.50" y2="934.99" stroke="#cdcdcd" stroke-width="1"/><line x1="1190.20" y1="952.11" x2="1180.68" y2="947.67" stroke="#d2d2d2" stroke-width="1"/><line x1="1170.57" y1="936.80" x2="1156.72" y2="928.80" stroke="#cdcdcd" stroke-width="1"/><line x1="1191.79" y1="949.05" x2="1182.70" y2="943.80" stroke="#d2d2d2" stroke-width="1"/><line x1="1173.57" y1="932.09" x2="1160.47" y2="922.91" stroke="#cdcdcd" stroke-width="1"/><line x1="1193.64" y1="946.14" x2="1185.04" y2="940.12" stroke="#d2d2d2" stroke-width="1"/><line x1="1176.97" y1="927.66" x2="1164.72" y2="917.38" stroke="#cdcdcd" stroke-width="1"/><line x1="1195.74" y1="943.41" x2="1187.70" y2="936.66" stroke="#d2d2d2" stroke-width="1"/><line x1="1180.75" y1="923.55" x2="1169.43" y2="912.23" stroke="#cdcdcd" stroke-width="1"/><line x1="1198.07" y1="940.87" x2="1190.64" y2="933.44" stroke="#d2d2d2" stroke-width="1"/><line x1="1184.86" y1="919.77" x2="1174.58" y2="907.52" stroke="#cdcdcd" stroke-width="1"/><line x1="1200.61" y1="938.54" x2="1193.86" y2="930.50" stroke="#d2d2d2" stroke-width="1"/><line x1="1189.29" y1="916.37" x2="1180.11" y2="903.27" stroke="#cdcdcd" stroke-width="1"/><line x1="1203.34" y1="936.44" x2="1197.32" y2="927.84" stroke="#d2d2d2" stroke-width="1"/><line x1="1194.00" y1="913.37" x2="1186.00" y2="899.52" stroke="#cdcdcd" stroke-width="1"/><line x1="1206.25" y1="934.59" x2="1201.00" y2="925.50" stroke="#d2d2d2" stroke-width="1"/><line x1="1198.95" y1="910.80" x2="1192.19" y2="896.30" stroke="#cdcdcd" stroke-width="1"/><line x1="1209.31" y1="933.00" x2="1204.87" y2="923.48" stroke="#d2d2d2" stroke-width="1"/><line x1="1204.11" y1="908.66" x2="1198.64" y2="893.62" stroke="#cdcdcd" stroke-width="1"/><line x1="1212.49" y1="931.68" x2="1208.90" y2="921.82" stroke="#d2d2d2" stroke-width="1"/><line x1="1209.44" y1="906.98" x2="1205.29" y2="891.53" stroke="#cdcdcd" stroke-width="1"/><line x1="1215.78" y1="930.65" x2="1213.06" y2="920.50" stroke="#d2d2d2" stroke-width="1"/><line x1="1214.89" y1="905.77" x2="1212.11" y2="890.02" stroke="#cdcdcd" stroke-width="1"/><line x1="1219.14" y1="929.90" x2="1217.32" y2="919.56" stroke="#d2d2d2" stroke-width="1"/><line x1="1220.42" y1="905.04" x2="1219.03" y2="889.10" stroke="#cdcdcd" stroke-width="1"/><line x1="1222.56" y1="929.45" x2="1221.64" y2="918.99" stroke="#d2d2d2" stroke-width="1"/><line x1="1226.00" y1="904.80" x2="1226.00" y2="888.80" stroke="#cdcdcd" stroke-width="1"/><line x1="1226.00" y1="929.30" x2="1226.00" y2="918.80" stroke="#d2d2d2" stroke-width="1"/><line x1="1231.58" y1="905.04" x2="1232.97" y2="889.10" stroke="#cdcdcd" stroke-width="1"/><line x1="1229.44" y1="929.45" x2="1230.36" y2="918.99" stroke="#d2d2d2" stroke-width="1"/><line x1="1237.11" y1="905.77" x2="1239.89" y2="890.02" stroke="#cdcdcd" stroke-width="1"/><line x1="1232.86" y1="929.90" x2="1234.68" y2="919.56" stroke="#d2d2d2" stroke-width="1"/><line x1="1242.56" y1="906.98" x2="1246.71" y2="891.53" stroke="#cdcdcd" stroke-width="1"/><line x1="1236.22" y1="930.65" x2="1238.94" y2="920.50" stroke="#d2d2d2" stroke-width="1"/><line x1="1247.89" y1="908.66" x2="1253.36" y2="893.62" stroke="#cdcdcd" stroke-width="1"/><line x1="1239.51" y1="931.68" x2="1243.10" y2="921.82" stroke="#d2d2d2" stroke-width="1"/><line x1="1253.05" y1="910.80" x2="1259.81" y2="896.30" stroke="#cdcdcd" stroke-width="1"/><line x1="1242.69" y1="933.00" x2="1247.13" y2="923.48" stroke="#d2d2d2" stroke-width="1"/><line x1="1258.00" y1="913.37" x2="1266.00" y2="899.52" stroke="#cdcdcd" stroke-width="1"/><line x1="1245.75" y1="934.59" x2="1251.00" y2="925.50" stroke="#d2d2d2" stroke-width="1"/><line x1="1262.71" y1="916.37" x2="1271.89" y2="903.27" stroke="#cdcdcd" stroke-width="1"/><line x1="1248.66" y1="936.44" x2="1254.68" y2="927.84" stroke="#d2d2d2" stroke-width="1"/><line x1="1267.14" y1="919.77" x2="1277.42" y2="907.52" stroke="#cdcdcd" stroke-width="1"/><line x1="1251.39" y1="938.54" x2="1258.14" y2="930.50" stroke="#d2d2d2" stroke-width="1"/><line x1="1271.25" y1="923.55" x2="1282.57" y2="912.23" stroke="#cdcdcd" stroke-width="1"/><line x1="1253.93" y1="940.87" x2="1261.36" y2="933.44" stroke="#d2d2d2" stroke-width="1"/><line x1="1275.03" y1="927.66" x2="1287.28" y2="917.38" stroke="#cdcdcd" stroke-width="1"/><line x1="1256.26" y1="943.41" x2="1264.30" y2="936.66" stroke="#d2d2d2" stroke-width="1"/><line x1="1278.43" y1="932.09" x2="1291.53" y2="922.91" stroke="#cdcdcd" stroke-width="1"/><line x1="1258.36" y1="946.14" x2="1266.96" y2="940.12" stroke="#d2d2d2" stroke-width="1"/><line x1="1281.43" y1="936.80" x2="1295.28" y2="928.80" stroke="#cdcdcd" stroke-width="1"/><line x1="1260.21" y1="949.05" x2="1269.30" y2="943.80" stroke="#d2d2d2" stroke-width="1"/><line x1="1284.00" y1="941.75" x2="1298.50" y2="934.99" stroke="#cdcdcd" stroke-width="1"/><line x1="1261.80" y1="952.11" x2="1271.32" y2="947.67" stroke="#d2d2d2" stroke-width="1"/><line x1="1286.14" y1="946.91" x2="1301.18" y2="941.44" stroke="#cdcdcd" stroke-width="1"/><line x1="1263.12" y1="955.29" x2="1272.98" y2="951.70" stroke="#d2d2d2" stroke-width="1"/><line x1="1287.82" y1="952.24" x2="1303.27" y2="948.09" stroke="#cdcdcd" stroke-width="1"/><line x1="1264.15" y1="958.58" x2="1274.30" y2="955.86" stroke="#d2d2d2" stroke-width="1"/><line x1="1289.03" y1="957.69" x2="1304.78" y2="954.91" stroke="#cdcdcd" stroke-width="1"/><line x1="1264.90" y1="961.94" x2="1275.24" y2="960.12" stroke="#d2d2d2" stroke-width="1"/><line x1="1289.76" y1="963.22" x2="1305.70" y2="961.83" stroke="#cdcdcd" stroke-width="1"/><line x1="1265.35" y1="965.36" x2="1275.81" y2="964.44" stroke="#d2d2d2" stroke-width="1"/><line x1="1290.00" y1="968.80" x2="1306.00" y2="968.80" stroke="#cdcdcd" stroke-width="1"/><line x1="1265.50" y1="968.80" x2="1276.00" y2="968.80" stroke="#d2d2d2" stroke-width="1"/><line x1="1289.76" y1="974.38" x2="1305.70" y2="975.77" stroke="#cdcdcd" stroke-width="1"/><line x1="1265.35" y1="972.24" x2="1275.81" y2="973.16" stroke="#d2d2d2" stroke-width="1"/><line x1="1289.03" y1="979.91" x2="1304.78" y2="982.69" stroke="#cdcdcd" stroke-width="1"/><line x1="1264.90" y1="975.66" x2="1275.24" y2="977.48" stroke="#d2d2d2" stroke-width="1"/><line x1="1287.82" y1="985.36" x2="1303.27" y2="989.51" stroke="#cdcdcd" stroke-width="1"/><line x1="1264.15" y1="979.02" x2="1274.30" y2="981.74" stroke="#d2d2d2" stroke-width="1"/><line x1="1286.14" y1="990.69" x2="1301.18" y2="996.16" stroke="#cdcdcd" stroke-width="1"/><line x1="1263.12" y1="982.31" x2="1272.98" y2="985.90" stroke="#d2d2d2" stroke-width="1"/><line x1="1284.00" y1="995.85" x2="1298.50" y2="1002.61" stroke="#cdcdcd" stroke-width="1"/><line x1="1261.80" y1="985.49" x2="1271.32" y2="989.93" stroke="#d2d2d2" stroke-width="1"/><line x1="1281.43" y1="1000.80" x2="1295.28" y2="1008.80" stroke="#cdcdcd" stroke-width="1"/><line x1="1260.21" y1="988.55" x2="1269.30" y2="993.80" stroke="#d2d2d2" stroke-width="1"/><line x1="1170.57" y1="1000.80" x2="1152.39" y2="1011.30" stroke="#9a35a2" stroke-width="3"/><text x="1198.0" y="992.8" text-anchor="middle" font-family="Liberation Sans" font-size="11" fill="#c4c4c4">0</text><text x="1198.5" y="960.8" text-anchor="middle" font-family="Liberation Sans" font-size="11" fill="#c4c4c4">25</text><text x="1226.0" y="940.5" text-anchor="middle" font-family="Liberation Sans" font-size="11" fill="#c4c4c4">50</text><text x="1251.5" y="960.8" text-anchor="middle" font-family="Liberation Sans" font-size="11" fill="#c4c4c4">75</text><text x="1248.5" y="992.8" text-anchor="middle" font-family="Liberation Sans" font-size="11" fill="#c4c4c4">100</text><line x1="1454.57" y1="997.80" x2="1441.58" y2="1005.30" stroke="#1ab0c8" stroke-width="2"/><line x1="1475.79" y1="985.55" x2="1466.70" y2="990.80" stroke="#d2d2d2" stroke-width="1"/><line x1="1452.00" y1="992.85" x2="1438.40" y2="999.19" stroke="#1ab0c8" stroke-width="2"/><line x1="1474.20" y1="982.49" x2="1464.68" y2="986.93" stroke="#d2d2d2" stroke-width="1"/><line x1="1449.86" y1="987.69" x2="1435.76" y2="992.82" stroke="#1ab0c8" stroke-width="2"/><line x1="1472.88" y1="979.31" x2="1463.02" y2="982.90" stroke="#d2d2d2" stroke-width="1"/><line x1="1448.18" y1="982.36" x2="1433.69" y2="986.25" stroke="#1ab0c8" stroke-width="2"/><line x1="1471.85" y1="976.02" x2="1461.70" y2="978.74" stroke="#d2d2d2" stroke-width="1"/><line x1="1446.97" y1="976.91" x2="1432.20" y2="979.52" stroke="#1ab0c8" stroke-width="2"/><line x1="1471.10" y1="972.66" x2="1460.76" y2="974.48" stroke="#d2d2d2" stroke-width="1"/><line x1="1446.24" y1="971.38" x2="1430.30" y2="972.77" stroke="#cdcdcd" stroke-width="1"/><line x1="1470.65" y1="969.24" x2="1460.19" y2="970.16" stroke="#d2d2d2" stroke-width="1"/><line x1="1446.00" y1="965.80" x2="1430.00" y2="965.80" stroke="#cdcdcd" stroke-width="1"/><line x1="1470.50" y1="965.80" x2="1460.00" y2="965.80" stroke="#d2d2d2" stroke-width="1"/><line x1="1446.24" y1="960.22" x2="1430.30" y2="958.83" stroke="#cdcdcd" stroke-width="1"/><line x1="1470.65" y1="962.36" x2="1460.19" y2="961.44" stroke="#d2d2d2" stroke-width="1"/><line x1="1446.97" y1="954.69" x2="1431.22" y2="951.91" stroke="#cdcdcd" stroke-width="1"/><line x1="1471.10" y1="958.94" x2="1460.76" y2="957.12" stroke="#d2d2d2" stroke-width="1"/><line x1="1448.18" y1="949.24" x2="1432.73" y2="945.09" stroke="#cdcdcd" stroke-width="1"/><line x1="1471.85" y1="955.58" x2="1461.70" y2="952.86" stroke="#d2d2d2" stroke-width="1"/><line x1="1449.86" y1="943.91" x2="1434.82" y2="938.44" stroke="#cdcdcd" stroke-width="1"/><line x1="1472.88" y1="952.29" x2="1463.02" y2="948.70" stroke="#d2d2d2" stroke-width="1"/><line x1="1452.00" y1="938.75" x2="1437.50" y2="931.99" stroke="#cdcdcd" stroke-width="1"/><line x1="1474.20" y1="949.11" x2="1464.68" y2="944.67" stroke="#d2d2d2" stroke-width="1"/><line x1="1454.57" y1="933.80" x2="1440.72" y2="925.80" stroke="#cdcdcd" stroke-width="1"/><line x1="1475.79" y1="946.05" x2="1466.70" y2="940.80" stroke="#d2d2d2" stroke-width="1"/><line x1="1457.57" y1="929.09" x2="1444.47" y2="919.91" stroke="#cdcdcd" stroke-width="1"/><line x1="1477.64" y1="943.14" x2="1469.04" y2="937.12" stroke="#d2d2d2" stroke-width="1"/><line x1="1460.97" y1="924.66" x2="1448.72" y2="914.38" stroke="#cdcdcd" stroke-width="1"/><line x1="1479.74" y1="940.41" x2="1471.70" y2="933.66" stroke="#d2d2d2" stroke-width="1"/><line x1="1464.75" y1="920.55" x2="1453.43" y2="909.23" stroke="#cdcdcd" stroke-width="1"/><line x1="1482.07" y1="937.87" x2="1474.64" y2="930.44" stroke="#d2d2d2" stroke-width="1"/><line x1="1468.86" y1="916.77" x2="1458.58" y2="904.52" stroke="#cdcdcd" stroke-width="1"/><line x1="1484.61" y1="935.54" x2="1477.86" y2="927.50" stroke="#d2d2d2" stroke-width="1"/><line x1="1473.29" y1="913.37" x2="1464.11" y2="900.27" stroke="#cdcdcd" stroke-width="1"/><line x1="1487.34" y1="933.44" x2="1481.32" y2="924.84" stroke="#d2d2d2" stroke-width="1"/><line x1="1478.00" y1="910.37" x2="1470.00" y2="896.52" stroke="#cdcdcd" stroke-width="1"/><line x1="1490.25" y1="931.59" x2="1485.00" y2="922.50" stroke="#d2d2d2" stroke-width="1"/><line x1="1482.95" y1="907.80" x2="1476.19" y2="893.30" stroke="#cdcdcd" stroke-width="1"/><line x1="1493.31" y1="930.00" x2="1488.87" y2="920.48" stroke="#d2d2d2" stroke-width="1"/><line x1="1488.11" y1="905.66" x2="1482.64" y2="890.62" stroke="#cdcdcd" stroke-width="1"/><line x1="1496.49" y1="928.68" x2="1492.90" y2="918.82" stroke="#d2d2d2" stroke-width="1"/><line x1="1493.44" y1="903.98" x2="1489.29" y2="888.53" stroke="#cdcdcd" stroke-width="1"/><line x1="1499.78" y1="927.65" x2="1497.06" y2="917.50" stroke="#d2d2d2" stroke-width="1"/><line x1="1498.89" y1="902.77" x2="1496.11" y2="887.02" stroke="#cdcdcd" stroke-width="1"/><line x1="1503.14" y1="926.90" x2="1501.32" y2="916.56" stroke="#d2d2d2" stroke-width="1"/><line x1="1504.42" y1="902.04" x2="1503.03" y2="886.10" stroke="#cdcdcd" stroke-width="1"/><line x1="1506.56" y1="926.45" x2="1505.64" y2="915.99" stroke="#d2d2d2" stroke-width="1"/><line x1="1510.00" y1="901.80" x2="1510.00" y2="885.80" stroke="#cdcdcd" stroke-width="1"/><line x1="1510.00" y1="926.30" x2="1510.00" y2="915.80" stroke="#d2d2d2" stroke-width="1"/><line x1="1515.58" y1="902.04" x2="1516.97" y2="886.10" stroke="#cdcdcd" stroke-width="1"/><line x1="1513.44" y1="926.45" x2="1514.36" y2="915.99" stroke="#d2d2d2" stroke-width="1"/><line x1="1521.11" y1="902.77" x2="1523.89" y2="887.02" stroke="#cdcdcd" stroke-width="1"/><line x1="1516.86" y1="926.90" x2="1518.68" y2="916.56" stroke="#d2d2d2" stroke-width="1"/><line x1="1526.56" y1="903.98" x2="1530.71" y2="888.53" stroke="#cdcdcd" stroke-width="1"/><line x1="1520.22" y1="927.65" x2="1522.94" y2="917.50" stroke="#d2d2d2" stroke-width="1"/><line x1="1531.89" y1="905.66" x2="1537.36" y2="890.62" stroke="#cdcdcd" stroke-width="1"/><line x1="1523.51" y1="928.68" x2="1527.10" y2="918.82" stroke="#d2d2d2" stroke-width="1"/><line x1="1537.05" y1="907.80" x2="1543.81" y2="893.30" stroke="#cdcdcd" stroke-width="1"/><line x1="1526.69" y1="930.00" x2="1531.13" y2="920.48" stroke="#d2d2d2" stroke-width="1"/><line x1="1542.00" y1="910.37" x2="1550.00" y2="896.52" stroke="#cdcdcd" stroke-width="1"/><line x1="1529.75" y1="931.59" x2="1535.00" y2="922.50" stroke="#d2d2d2" stroke-width="1"/><line x1="1546.71" y1="913.37" x2="1555.89" y2="900.27" stroke="#cdcdcd" stroke-width="1"/><line x1="1532.66" y1="933.44" x2="1538.68" y2="924.84" stroke="#d2d2d2" stroke-width="1"/><line x1="1551.14" y1="916.77" x2="1561.42" y2="904.52" stroke="#cdcdcd" stroke-width="1"/><line x1="1535.39" y1="935.54" x2="1542.14" y2="927.50" stroke="#d2d2d2" stroke-width="1"/><line x1="1555.25" y1="920.55" x2="1566.57" y2="909.23" stroke="#cdcdcd" stroke-width="1"/><line x1="1537.93" y1="937.87" x2="1545.36" y2="930.44" stroke="#d2d2d2" stroke-width="1"/><line x1="1559.03" y1="924.66" x2="1571.28" y2="914.38" stroke="#cdcdcd" stroke-width="1"/><line x1="1540.26" y1="940.41" x2="1548.30" y2="933.66" stroke="#d2d2d2" stroke-width="1"/><line x1="1562.43" y1="929.09" x2="1575.53" y2="919.91" stroke="#cdcdcd" stroke-width="1"/><line x1="1542.36" y1="943.14" x2="1550.96" y2="937.12" stroke="#d2d2d2" stroke-width="1"/><line x1="1565.43" y1="933.80" x2="1579.28" y2="925.80" stroke="#cdcdcd" stroke-width="1"/><line x1="1544.21" y1="946.05" x2="1553.30" y2="940.80" stroke="#d2d2d2" stroke-width="1"/><line x1="1568.00" y1="938.75" x2="1582.50" y2="931.99" stroke="#cdcdcd" stroke-width="1"/><line x1="1545.80" y1="949.11" x2="1555.32" y2="944.67" stroke="#d2d2d2" stroke-width="1"/><line x1="1570.14" y1="943.91" x2="1585.18" y2="938.44" stroke="#cdcdcd" stroke-width="1"/><line x1="1547.12" y1="952.29" x2="1556.98" y2="948.70" stroke="#d2d2d2" stroke-width="1"/><line x1="1571.82" y1="949.24" x2="1587.27" y2="945.09" stroke="#cdcdcd" stroke-width="1"/><line x1="1548.15" y1="955.58" x2="1558.30" y2="952.86" stroke="#d2d2d2" stroke-width="1"/><line x1="1573.03" y1="954.69" x2="1588.78" y2="951.91" stroke="#cdcdcd" stroke-width="1"/><line x1="1548.90" y1="958.94" x2="1559.24" y2="957.12" stroke="#d2d2d2" stroke-width="1"/><line x1="1573.76" y1="960.22" x2="1589.70" y2="958.83" stroke="#cdcdcd" stroke-width="1"/><line x1="1549.35" y1="962.36" x2="1559.81" y2="961.44" stroke="#d2d2d2" stroke-width="1"/><line x1="1574.00" y1="965.80" x2="1590.00" y2="965.80" stroke="#cdcdcd" stroke-width="1"/><line x1="1549.50" y1="965.80" x2="1560.00" y2="965.80" stroke="#d2d2d2" stroke-width="1"/><line x1="1573.76" y1="971.38" x2="1589.70" y2="972.77" stroke="#cdcdcd" stroke-width="1"/><line x1="1549.35" y1="969.24" x2="1559.81" y2="970.16" stroke="#d2d2d2" stroke-width="1"/><line x1="1573.03" y1="976.91" x2="1588.78" y2="979.69" stroke="#cdcdcd" stroke-width="1"/><line x1="1548.90" y1="972.66" x2="1559.24" y2="974.48" stroke="#d2d2d2" stroke-width="1"/><line x1="1571.82" y1="982.36" x2="1587.27" y2="986.51" stroke="#cdcdcd" stroke-width="1"/><line x1="1548.15" y1="976.02" x2="1558.30" y2="978.74" stroke="#d2d2d2" stroke-width="1"/><line x1="1570.14" y1="987.69" x2="1585.18" y2="993.16" stroke="#cdcdcd" stroke-width="1"/><line x1="1547.12" y1="979.31" x2="1556.98" y2="982.90" stroke="#d2d2d2" stroke-width="1"/><line x1="1568.00" y1="992.85" x2="1582.50" y2="999.61" stroke="#cdcdcd" stroke-width="1"/><line x1="1545.80" y1="982.49" x2="1555.32" y2="986.93" stroke="#d2d2d2" stroke-width="1"/><line x1="1565.43" y1="997.80" x2="1579.28" y2="1005.80" stroke="#cdcdcd" stroke-width="1"/><line x1="1544.21" y1="985.55" x2="1553.30" y2="990.80" stroke="#d2d2d2" stroke-width="1"/><line x1="1446.24" y1="971.38" x2="1425.32" y2="973.21" stroke="#9a35a2" stroke-width="3"/><text x="1482.0" y="989.8" text-anchor="middle" font-family="Liberation Sans" font-size="11" fill="#c4c4c4">0</text><text x="1482.5" y="957.8" text-anchor="middle" font-family="Liberation Sans" font-size="11" fill="#c4c4c4">25</text><text x="1510.0" y="937.5" text-anchor="middle" font-family="Liberation Sans" font-size="11" fill="#c4c4c4">50</text><text x="1535.5" y="957.8" text-anchor="middle" font-family="Liberation Sans" font-size="11" fill="#c4c4c4">75</text><text x="1532.5" y="989.8" text-anchor="middle" font-family="Liberation Sans" font-size="11" fill="#c4c4c4">100</text></svg>
<div class="lg" style="left:6px;top:143px;width:290px;height:18px;color:#4a66c4">TCK1：峰值=10.0Vk,时间=09:46:27.045</div>
<div class="lg" style="left:298px;top:143px;width:282px;height:18px;color:#f2b212">TCK3：峰值=10.1V,时间=09:46:19.863</div>
<div class="a" style="left:6px;top:163px;width:282px;height:1px;background:#3a3a3a;box-shadow:0 0.5px 0 #888"></div>
<div class="lg" style="left:617px;top:143px;width:274px;height:18px;color:#a89a55">HV2：峰值=1.18V,时间=09:46:23.677</div>
<div class="lg" style="left:893px;top:143px;width:282px;height:18px;color:#6abf62">HV3：峰值=0.216V,时间=09:46:21.020</div>
<div class="a" style="left:617px;top:163px;width:274px;height:1px;background:#3a3a3a;box-shadow:0 0.5px 0 #888"></div>
<div class="lg" style="left:6px;top:412px;width:42px;height:18px;color:#4a66c4">TCK1</div>
<div class="lg" style="left:50px;top:412px;width:42px;height:18px;color:#3aaa90">TCK2</div>
<div class="lg" style="left:94px;top:412px;width:42px;height:18px;color:#2a84f2">TCK4</div>
<div class="lg" style="left:138px;top:412px;width:42px;height:18px;color:#f2b212">TCK3</div>
<div class="lg" style="left:615px;top:411px;width:34px;height:18px;color:#22b0a0">HV1</div>
<div class="lg" style="left:652px;top:411px;width:33px;height:18px;color:#a89a55">HV2</div>
<div class="lg" style="left:687px;top:411px;width:34px;height:18px;color:#6abf62">HV3</div>
<div class="lg" style="left:723px;top:411px;width:34px;height:18px;color:#2a9aa8">HV4</div>
<div class="lg" style="left:759px;top:411px;width:82px;height:18px;color:#e04a5e">Variable1</div>
<div class="a" style="left:10px;top:437px;font-size:11.5px;line-height:13px;color:#111;letter-spacing:-0.3px">1024点</div>
<div class="a" style="left:620px;top:436px;font-size:11.5px;line-height:13px;color:#111;letter-spacing:-0.3px">1024点</div>
<div class="a" style="left:242px;top:164.5px"><svg width="22" height="22" viewBox="0 0 22 22"><path d="M3 3v17h17" fill="none" stroke="#62a4f6" stroke-width="1.4"/><path d="M1 5l2-3 2 3z M18 18l3 2-3 2z" fill="#62a4f6"/><path d="M3.5 15c3-5.5 5.5-5.5 7.5-1s4.5 3.5 9-1.5" fill="none" stroke="#f5901e" stroke-width="1.6"/></svg></div>
<div class="ttl" style="left:273px;top:169.5px">记录仪</div>
<div class="a" style="left:852px;top:164.5px"><svg width="22" height="22" viewBox="0 0 22 22"><path d="M3 3v17h17" fill="none" stroke="#62a4f6" stroke-width="1.4"/><path d="M1 5l2-3 2 3z M18 18l3 2-3 2z" fill="#62a4f6"/><path d="M3.5 15c3-5.5 5.5-5.5 7.5-1s4.5 3.5 9-1.5" fill="none" stroke="#f5901e" stroke-width="1.6"/></svg></div>
<div class="ttl" style="left:883px;top:169.5px">记录仪</div>
<div class="a" style="left:242px;top:433.5px"><svg width="22" height="22" viewBox="0 0 22 22"><path d="M3 3v17h17" fill="none" stroke="#62a4f6" stroke-width="1.4"/><path d="M1 5l2-3 2 3z M18 18l3 2-3 2z" fill="#62a4f6"/><path d="M4 19.5v-7l1.5 -1 1.5 3 1.5 -1.5 1.5 1 1.5-3 1.5 1 1.5 2 1.5 1v5z" fill="#f5901e"/></svg></div>
<div class="ttl" style="left:273px;top:438.5px">分析仪</div>
<div class="a" style="left:851px;top:432.5px"><svg width="22" height="22" viewBox="0 0 22 22"><path d="M3 3v17h17" fill="none" stroke="#62a4f6" stroke-width="1.4"/><path d="M1 5l2-3 2 3z M18 18l3 2-3 2z" fill="#62a4f6"/><path d="M4 19.5v-7l1.5 -1 1.5 3 1.5 -1.5 1.5 1 1.5-3 1.5 1 1.5 2 1.5 1v5z" fill="#f5901e"/></svg></div>
<div class="ttl" style="left:882px;top:437.5px">分析仪</div>
<div class="a" style="left:581px;top:436px"><svg width="18" height="18" viewBox="0 0 18 18"><rect width="18" height="18" rx="2" fill="#0a96f6"/><path d="M3 12l4-4 3 3 5-5" fill="none" stroke="#fff" stroke-width="1.8"/></svg></div>
<div class="a" style="left:1190px;top:435px"><svg width="18" height="18" viewBox="0 0 18 18"><rect width="18" height="18" rx="2" fill="#0a96f6"/><path d="M3 12l4-4 3 3 5-5" fill="none" stroke="#fff" stroke-width="1.8"/></svg></div>
<div class="dot" style="left:1242.0px;top:154.0px"></div>
<div class="a" style="left:1254.0px;top:148.5px;font-size:17px;line-height:20px;font-weight:bold;color:#222;white-space:nowrap">TCK1</div>
<div class="a" style="left:1330.6px;width:200px;top:278.32px;font-size:26px;line-height:26px;font-weight:bold;color:#282828;text-align:center;white-space:nowrap;letter-spacing:1.2px">8.7Vk</div>
<div class="dot" style="left:1242.0px;top:339.0px"></div>
<div class="a" style="left:1254.0px;top:333.5px;font-size:17px;line-height:20px;font-weight:bold;color:#222;white-space:nowrap">TCK2</div>
<div class="a" style="left:1330.6px;width:200px;top:463.32px;font-size:26px;line-height:26px;font-weight:bold;color:#282828;text-align:center;white-space:nowrap;letter-spacing:1.2px">10.1V</div>
<div class="dot" style="left:23.0px;top:863.0px"></div>
<div class="a" style="left:35.0px;top:857.5px;font-size:17px;line-height:20px;font-weight:bold;color:#222;white-space:nowrap">HV4</div>
<div class="a" style="left:28.5px;width:200px;top:1006.82px;font-size:26px;line-height:26px;font-weight:bold;color:#282828;text-align:center;white-space:nowrap;letter-spacing:1.2px">1.2V</div>
<div class="dot" style="left:288.0px;top:864.0px"></div>
<div class="a" style="left:300.0px;top:858.5px;font-size:17px;line-height:20px;font-weight:bold;color:#222;white-space:nowrap">Variable1</div>
<div class="a" style="left:293.5px;width:200px;top:1007.82px;font-size:26px;line-height:26px;font-weight:bold;color:#282828;text-align:center;white-space:nowrap;letter-spacing:1.2px">0kV</div>
<div class="dot" style="left:556.0px;top:863.0px"></div>
<div class="a" style="left:568.0px;top:857.5px;font-size:17px;line-height:20px;font-weight:bold;color:#222;white-space:nowrap">HV2</div>
<div class="a" style="left:561.5px;width:200px;top:1006.82px;font-size:26px;line-height:26px;font-weight:bold;color:#282828;text-align:center;white-space:nowrap;letter-spacing:1.2px">1.2V</div>
<div class="dot" style="left:832.0px;top:864.0px"></div>
<div class="a" style="left:844.0px;top:858.5px;font-size:17px;line-height:20px;font-weight:bold;color:#222;white-space:nowrap">HV3</div>
<div class="a" style="left:837.5px;width:200px;top:1007.82px;font-size:26px;line-height:26px;font-weight:bold;color:#282828;text-align:center;white-space:nowrap;letter-spacing:1.2px">0.1V</div>
<div class="dot" style="left:1122.0px;top:864.0px"></div>
<div class="a" style="left:1134.0px;top:858.5px;font-size:17px;line-height:20px;font-weight:bold;color:#222;white-space:nowrap">HV1</div>
<div class="a" style="left:1127.5px;width:200px;top:1007.82px;font-size:26px;line-height:26px;font-weight:bold;color:#282828;text-align:center;white-space:nowrap;letter-spacing:1.2px">0V</div>
<div class="dot" style="left:1406.0px;top:861.0px"></div>
<div class="a" style="left:1418.0px;top:855.5px;font-size:17px;line-height:20px;font-weight:bold;color:#222;white-space:nowrap">TCK3</div>
<div class="a" style="left:1411.5px;width:200px;top:1004.82px;font-size:26px;line-height:26px;font-weight:bold;color:#282828;text-align:center;white-space:nowrap;letter-spacing:1.2px">10.1V</div>
<div class="a" style="left:1232px;top:521px;width:5px;height:5px;border-radius:50%;background:#4f8ef7"></div>
<div class="a" style="left:1241px;top:518px;font-size:11px;line-height:13px;color:#333">HV3</div>
<div class="val" style="left:1228px;width:201px;top:561px;font-size:48px;line-height:56px;letter-spacing:-1px">0.1V</div>
<div class="a" style="left:1454px;top:522px;width:5px;height:5px;border-radius:50%;background:#4f8ef7"></div>
<div class="a" style="left:1463px;top:519px;font-size:11px;line-height:13px;color:#333">HV2</div>
<div class="val" style="left:1450px;width:181px;top:562px;font-size:48px;line-height:56px;letter-spacing:-1px">1.2V</div>
<div class="dot" style="left:15px;top:683px"></div>
<div class="a" style="left:26px;top:679px;font-size:16.5px;line-height:18px;color:#333;white-space:nowrap;letter-spacing:-0.35px">TCK1</div>
<div class="val" style="left:7px;width:220px;top:725px;font-size:51px;line-height:60px;letter-spacing:-1px">8.7Vk</div>
<div class="dot" style="left:241px;top:682px"></div>
<div class="a" style="left:252px;top:678px;font-size:16.5px;line-height:18px;color:#333;white-space:nowrap;letter-spacing:-0.35px">TCK3</div>
<div class="val" style="left:233px;width:220px;top:724px;font-size:51px;line-height:60px;letter-spacing:-1px">10.1V</div>
<div class="dot" style="left:472px;top:683px"></div>
<div class="a" style="left:483px;top:679px;font-size:16.5px;line-height:18px;color:#333;white-space:nowrap;letter-spacing:-0.35px">TCK2</div>
<div class="val" style="left:464px;width:220px;top:725px;font-size:51px;line-height:60px;letter-spacing:-1px">10.1V</div>
<div class="dot" style="left:703px;top:685px"></div>
<div class="a" style="left:714px;top:681px;font-size:16.5px;line-height:18px;color:#333;white-space:nowrap;letter-spacing:-0.35px">HV4</div>
<div class="val" style="left:695px;width:220px;top:727px;font-size:51px;line-height:60px;letter-spacing:-1px">1.2V</div>
<div class="dot" style="left:935px;top:685px"></div>
<div class="a" style="left:946px;top:681px;font-size:16.5px;line-height:18px;color:#333;white-space:nowrap;letter-spacing:-0.35px">TCK4</div>
<div class="val" style="left:927px;width:220px;top:727px;font-size:51px;line-height:60px;letter-spacing:-1px">10.1V</div>
<div class="dot" style="left:1169px;top:684px"></div>
<div class="a" style="left:1180px;top:680px;font-size:16.5px;line-height:18px;color:#333;white-space:nowrap;letter-spacing:-0.35px">HV1</div>
<div class="val" style="left:1161px;width:220px;top:726px;font-size:51px;line-height:60px;letter-spacing:-1px">0.0V</div>
<div class="dot" style="left:1418px;top:685px"></div>
<div class="a" style="left:1429px;top:681px;font-size:16.5px;line-height:18px;color:#333;white-space:nowrap;letter-spacing:-0.35px">Variable1</div>
<div class="val" style="left:1410px;width:220px;top:727px;font-size:51px;line-height:60px;letter-spacing:-1px">0kV</div>
<div class="a" style="left:1655px;top:146.5px;width:19px;height:18.5px;border-radius:5px 5px 4px 4px;overflow:hidden;background:linear-gradient(180deg,#a9caf0 0%,#a2c4ec 40%,#6f9dd4 48%,#6a9ad2 75%,#3f93d4 80%,#3a90d2 100%)"><div class="a" style="left:4px;top:8px;width:11px;height:1.6px;background:#fff"></div></div>
<div class="tree" style="left:1679px;top:148.5px">vxcv</div>
<div class="a" style="left:1665px;top:186.5px;width:19px;height:18.5px;border-radius:5px 5px 4px 4px;overflow:hidden;background:linear-gradient(180deg,#a9caf0 0%,#a2c4ec 40%,#6f9dd4 48%,#6a9ad2 75%,#3f93d4 80%,#3a90d2 100%)"><div class="a" style="left:4px;top:8px;width:11px;height:1.6px;background:#fff"></div></div>
<div class="tree" style="left:1689px;top:188.5px">Q.raxx-station 101@752014</div>
<div class="a" style="left:1675px;top:226.5px;width:19px;height:18.5px;border-radius:5px 5px 4px 4px;overflow:hidden;background:linear-gradient(180deg,#a9caf0 0%,#a2c4ec 40%,#6f9dd4 48%,#6a9ad2 75%,#3f93d4 80%,#3a90d2 100%)"><div class="a" style="left:4px;top:8px;width:11px;height:1.6px;background:#fff"></div></div>
<div class="tree" style="left:1699px;top:228.5px">M01:A107</div>
<div class="tree" style="left:1709px;top:268.5px">V1:TCK1(AIN-Vk)</div>
<div class="tree" style="left:1709px;top:308.5px">V2:TCK2(AIN-V)</div>
<div class="tree" style="left:1709px;top:348.5px">V3:TCK3(AIN-V)</div>
<div class="tree" style="left:1709px;top:388.5px">V4:TCK4(AIN-V)</div>
<div class="a" style="left:1675px;top:426.5px;width:19px;height:18.5px;border-radius:5px 5px 4px 4px;overflow:hidden;background:linear-gradient(180deg,#a9caf0 0%,#a2c4ec 40%,#6f9dd4 48%,#6a9ad2 75%,#3f93d4 80%,#3a90d2 100%)"><div class="a" style="left:4px;top:8px;width:11px;height:1.6px;background:#fff"></div></div>
<div class="tree" style="left:1699px;top:428.5px">M02:A127</div>
<div class="tree" style="left:1709px;top:468.5px">V5:HV1(AIN-V)</div>
<div class="tree" style="left:1709px;top:508.5px">V6:HV2(AIN-V)</div>
<div class="tree" style="left:1709px;top:548.5px">V7:HV3(AIN-V)</div>
<div class="tree" style="left:1709px;top:588.5px">V8:HV4(AIN-V)</div>
<div class="tree" style="left:1709px;top:628.5px">V9:Variable1(ARI-kV)</div>
</body></html>
